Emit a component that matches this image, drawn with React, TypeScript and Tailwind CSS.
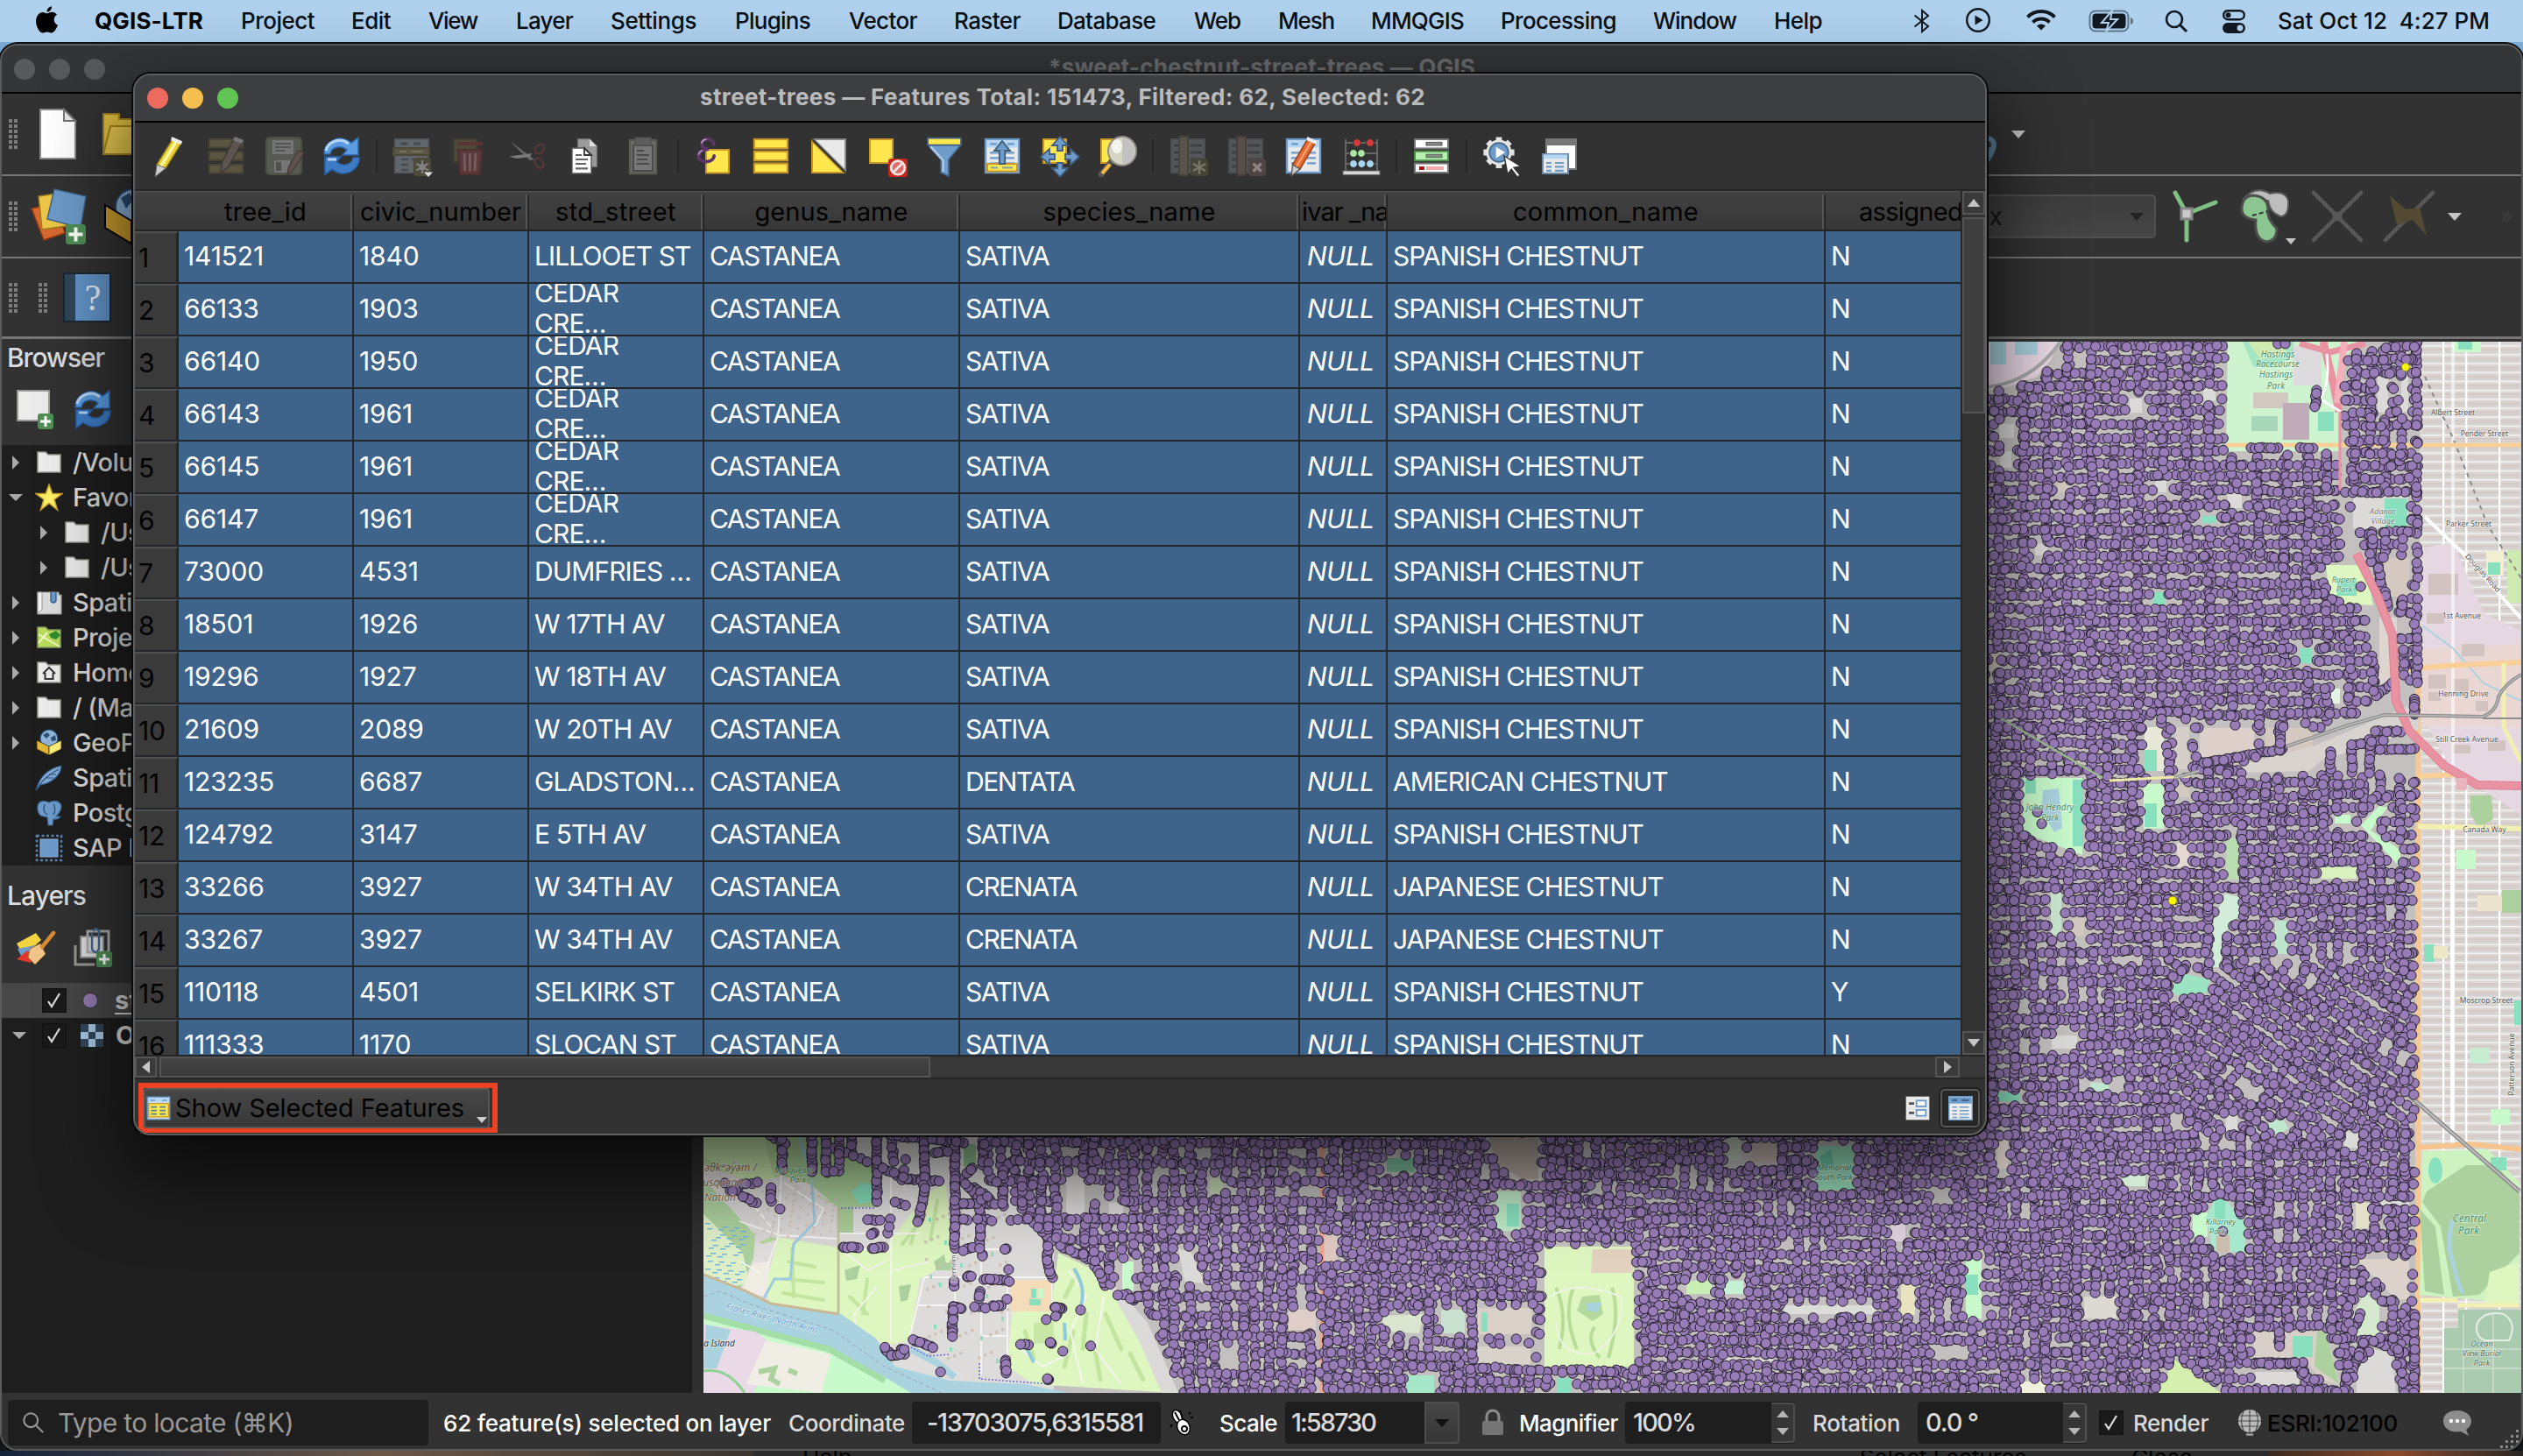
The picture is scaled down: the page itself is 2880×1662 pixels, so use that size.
import { useLayoutEffect, useMemo, useRef, type ReactNode } from "react";

/* ---------- text that keeps a fixed advance width ---------- */

function Fit({ w, className = "", children }: { w: number; className?: string; children: string }) {
  const ref = useRef<HTMLSpanElement>(null);
  useLayoutEffect(() => {
    const el = ref.current;
    if (!el) return;
    el.style.letterSpacing = "0px";
    const natural = el.getBoundingClientRect().width;
    el.style.letterSpacing = `${(w - natural) / children.length}px`;
  }, [w, children]);
  return (
    <span className="inline-block shrink-0" style={{ width: w }}>
      <span ref={ref} className={"inline-block whitespace-pre " + className}>
        {children}
      </span>
    </span>
  );
}

function Ico({ className = "size-12", children }: { className?: string; children: ReactNode }) {
  return (
    <svg viewBox="0 0 24 24" className={"shrink-0 " + className} fill="none">
      {children}
    </svg>
  );
}

/* ---------- map ---------- */

type Pt = [number, number];
type Area = { p: Pt[]; fill: string };

function rect(x1: number, y1: number, x2: number, y2: number, fill: string): Area {
  return { p: [[x1, y1], [x2, y1], [x2, y2], [x1, y2]], fill };
}

const GREY = "#dcdad8";
const TAUPE = "#d3c9c1";
const PARK = "#c8facc";
const PITCH = "#88e0be";
const GOLF = "#def6c0";

const openAreas: Area[] = [
  { p: [[2268, 390], [2352, 390], [2340, 412], [2325, 430], [2296, 440], [2268, 446]], fill: "#ead9e6" },
  { p: [[2543, 390], [2690, 390], [2672, 420], [2672, 515], [2541, 515]], fill: "#cdf3cf" },
  rect(2686, 566, 2749, 603, GREY),
  { p: [[2655, 645], [2700, 645], [2709, 691], [2660, 688]], fill: GOLF },
  rect(2722, 637, 2750, 681, TAUPE),
  rect(2448, 830, 2470, 880, "#e8e8d8"),
  rect(2483, 830, 2499, 878, "#d5cdc8"),
  rect(2511, 831, 2573, 864, "#ddcfc9"),
  rect(2586, 831, 2597, 862, TAUPE),
  rect(2609, 831, 2640, 858, TAUPE),
  { p: [[2560, 872], [2640, 852], [2720, 818], [2762, 800], [2762, 832], [2650, 868], [2636, 880], [2560, 882]], fill: "#d9d3d0" },
  { p: [[2309, 888], [2377, 888], [2377, 976], [2340, 962], [2309, 950]], fill: PARK },
  rect(2447, 895, 2470, 946, PARK),
  rect(2484, 896, 2499, 910, TAUPE),
  rect(2485, 962, 2499, 990, "#e3d8d2"),
  rect(2541, 957, 2556, 1004, "#b8dcb0"),
  { p: [[2540, 1020], [2556, 1024], [2556, 1044], [2540, 1064], [2534, 1104], [2525, 1104], [2527, 1050]], fill: "#d2ecd9" },
  rect(2597, 1051, 2611, 1089, "#bfe5cf"),
  rect(2341, 1018, 2353, 1068, "#cde9d2"),
  rect(2366, 1048, 2379, 1068, TAUPE),
  { p: [[2477, 1128], [2495, 1112], [2522, 1118], [2518, 1134], [2484, 1136]], fill: "#9be3c3" },
  { p: [[2695, 942], [2716, 920], [2725, 922], [2706, 948], [2740, 970], [2740, 990]], fill: PARK },
  rect(2665, 930, 2683, 940, PARK),
  rect(2650, 990, 2690, 1003, "#d9f2c0"),
  rect(2513, 589, 2529, 597, PITCH),
  rect(2457, 676, 2471, 692, PITCH),
  rect(2625, 740, 2640, 757, PITCH),
  rect(2660, 786, 2671, 803, "#e4f3e4"),
  rect(2716, 705, 2736, 780, "#ddd5d0"),
  rect(2273, 746, 2281, 766, TAUPE),
  rect(2323, 620, 2337, 634, GREY),
  rect(2431, 455, 2445, 471, GREY),
  rect(2515, 441, 2529, 457, GREY),
  rect(2282, 484, 2299, 500, GREY),
  rect(2283, 515, 2296, 534, GREY),
  rect(2460, 549, 2473, 562, GREY),
  rect(2543, 563, 2559, 580, GREY),
  rect(2349, 549, 2362, 562, TAUPE),
  rect(2714, 430, 2726, 471, GREY),
  rect(2741, 430, 2749, 470, GREY),
  rect(2073, 1308, 2116, 1358, "#9be3c0"),
  rect(1972, 1298, 1987, 1325, "#c5d3c0"),
  rect(2000, 1303, 2031, 1327, "#c9b9b4"),
  rect(2280, 1300, 2292, 1334, "#d9cfc6"),
  rect(2503, 1384, 2520, 1412, PARK),
  { p: [[2528, 1369], [2540, 1369], [2563, 1396], [2563, 1429], [2526, 1429], [2518, 1390]], fill: "#a5e8cb" },
  rect(2244, 1437, 2262, 1505, PARK),
  rect(2689, 1373, 2704, 1402, "#e2dfc9"),
  rect(2718, 1370, 2750, 1376, GREY),
  { p: [[2690, 1437], [2750, 1437], [2750, 1483], [2735, 1483]], fill: "#ddd1cc" },
  { p: [[2700, 1475], [2716, 1490], [2716, 1527], [2690, 1527], [2686, 1500]], fill: "#d3e8cc" },
  { p: [[2573, 1520], [2655, 1520], [2672, 1582], [2650, 1575], [2630, 1552], [2573, 1552]], fill: "#d8cfc8" },
  rect(2574, 1566, 2624, 1582, GREY),
  { p: [[2690, 1565], [2710, 1540], [2730, 1545], [2735, 1590], [2690, 1590]], fill: GREY },
  { p: [[2482, 1552], [2500, 1565], [2535, 1590], [2463, 1590]], fill: "#d4efae" },
  rect(2036, 1490, 2142, 1500, "#dcdcd8"),
  rect(1925, 1462, 1954, 1477, "#c9eeb4"),
  rect(1968, 1462, 1990, 1477, "#c4f0d4"),
  rect(2379, 1480, 2416, 1505, "#dcd8d2"),
  rect(2158, 1396, 2175, 1417, "#e2d3e0"),
  rect(2170, 1466, 2186, 1501, "#e8e2c0"),
  rect(1968, 1550, 2024, 1554, GREY),
  rect(2280, 1247, 2305, 1257, PITCH),
  rect(2386, 1236, 2407, 1245, "#bfe6cf"),
  rect(2342, 1182, 2371, 1197, GREY),
  rect(2541, 1272, 2554, 1292, GREY),
  { p: [[2586, 1285], [2605, 1275], [2612, 1288], [2600, 1296]], fill: "#bfe8cf" },
  rect(2676, 1292, 2694, 1310, GREY),
  rect(2423, 1342, 2449, 1354, "#cfe9d2"),
  rect(2306, 1577, 2336, 1590, "#f2eedc"),
  rect(1763, 1423, 1865, 1560, GOLF),
  rect(1708, 1360, 1736, 1405, "#bfe9c8"),
  { p: [[1698, 1296], [1756, 1296], [1756, 1346], [1738, 1346], [1710, 1330]], fill: "#b5a8a0" },
  rect(1583, 1322, 1615, 1338, "#7fbf9f"),
  rect(1687, 1493, 1748, 1523, "#d9d0c8"),
  rect(1687, 1537, 1747, 1557, "#d8d2ca"),
  rect(1471, 1495, 1502, 1518, "#e0cdc8"),
  rect(1606, 1570, 1637, 1590, "#a6e6c8"),
  rect(1777, 1573, 1793, 1590, PITCH),
  rect(1281, 1440, 1294, 1473, PARK),
  rect(1217, 1342, 1238, 1388, GREY),
  rect(1266, 1373, 1282, 1388, GREY),
  rect(1381, 1345, 1396, 1362, "#c4d9b4"),
  rect(1508, 1410, 1526, 1442, "#e0c9c2"),
  { p: [[1345, 1425], [1360, 1430], [1375, 1465], [1352, 1462]], fill: GREY },
  { p: [[1575, 1502], [1625, 1500], [1620, 1522], [1585, 1520]], fill: "#d9e5cf" },
  rect(1645, 1495, 1672, 1522, "#c9e2d0"),
];

const details: Area[] = [
  { p: [[2560, 390], [2618, 390], [2618, 404], [2600, 420], [2572, 418]], fill: "#a4e6c4" },
  { p: [[2566, 390], [2612, 390], [2608, 406], [2580, 410]], fill: "#cdebb0" },
  rect(2572, 448, 2612, 466, TAUPE),
  rect(2570, 475, 2600, 492, "#a7d7b8"),
  rect(2606, 460, 2636, 502, "#c0acb8"),
  rect(2646, 470, 2664, 492, PITCH),
  rect(2618, 395, 2650, 440, "#dddadd"),
  rect(2722, 569, 2748, 602, PITCH),
  rect(2668, 660, 2690, 680, PITCH),
  rect(2272, 390, 2290, 416, "#aad3df"),
  rect(2300, 390, 2326, 405, "#aad3df"),
  { p: [[2332, 902], [2350, 900], [2354, 945], [2345, 950], [2330, 925]], fill: "#aad3df" },
  rect(2366, 890, 2377, 966, PITCH),
  rect(2312, 890, 2324, 906, PITCH),
  rect(2448, 856, 2462, 880, PITCH),
  rect(2448, 917, 2462, 944, PITCH),
  rect(2528, 1369, 2540, 1392, PITCH),
  rect(2530, 1410, 2545, 1429, "#cbbcae"),
  rect(2244, 1455, 2258, 1478, PITCH),
  rect(2617, 1525, 2640, 1549, PITCH),
  { p: [[2645, 1520], [2655, 1520], [2670, 1580], [2642, 1560]], fill: "#add19e" },
  { p: [[1818, 1426], [1864, 1426], [1864, 1453], [1816, 1453]], fill: "#e3d2c0" },
  { p: [[1806, 1480], [1826, 1478], [1830, 1500], [1818, 1508], [1800, 1496]], fill: "#b5d99c" },
  { p: [[1810, 1488], [1828, 1486], [1824, 1498], [1812, 1496]], fill: "#aad3df" },
  rect(1720, 1374, 1734, 1400, PITCH),
  rect(1691, 1498, 1698, 1520, PITCH),
  { p: [[2077, 1320], [2090, 1312], [2094, 1330], [2080, 1334]], fill: "#76cfae" },
];

function inside(pts: Pt[], x: number, y: number) {
  let hit = false;
  for (let i = 0, j = pts.length - 1; i < pts.length; j = i++) {
    const [xi, yi] = pts[i];
    const [xj, yj] = pts[j];
    if (yi > y !== yj > y && x < ((xj - xi) * (y - yi)) / (yj - yi) + xi) hit = !hit;
  }
  return hit;
}

const boxes = openAreas.map((a) => {
  const xs = a.p.map((q) => q[0]);
  const ys = a.p.map((q) => q[1]);
  return [Math.min(...xs) - 5, Math.min(...ys) - 5, Math.max(...xs) + 5, Math.max(...ys) + 5];
});

function blocked(x: number, y: number) {
  for (let i = 0; i < openAreas.length; i++) {
    const b = boxes[i];
    if (x < b[0] || x > b[2] || y < b[1] || y > b[3]) continue;
    const p = openAreas[i].p;
    if (inside(p, x - 3, y) || inside(p, x + 3, y) || inside(p, x, y - 3) || inside(p, x, y + 3)) return true;
  }
  return false;
}

type Zone = { p: Pt[]; angle: number; row: number; col: number; rowSkip: number; colSkip: number };

const zones: Zone[] = [
  { p: [[2262, 446], [2296, 440], [2330, 428], [2354, 388], [2543, 388], [2543, 518], [2668, 518], [2673, 640], [2700, 700], [2716, 790], [2690, 815], [2640, 835], [2262, 835]], angle: 0, row: 15, col: 27, rowSkip: 0.01, colSkip: 0.1 },
  { p: [[2676, 405], [2760, 388], [2760, 780], [2745, 780], [2735, 700], [2700, 630], [2676, 560]], angle: 0, row: 15.2, col: 18.5, rowSkip: 0.08, colSkip: 0.08 },
  { p: [[2262, 828], [2640, 828], [2640, 850], [2560, 872], [2560, 884], [2757, 884], [2757, 1100], [2262, 1100]], angle: 0, row: 14.8, col: 22, rowSkip: 0.02, colSkip: 0.1 },
  { p: [[2262, 1100], [2470, 1100], [2500, 1300], [2262, 1300]], angle: 0, row: 14.6, col: 22, rowSkip: 0.03, colSkip: 0.1 },
  { p: [[2470, 1100], [2757, 1100], [2757, 1270], [2700, 1300], [2500, 1300]], angle: 34, row: 13.8, col: 23, rowSkip: 0.04, colSkip: 0.15 },
  { p: [[2262, 1300], [2500, 1300], [2700, 1300], [2757, 1270], [2757, 1590], [2262, 1590]], angle: 0, row: 14.8, col: 17, rowSkip: 0.1, colSkip: 0.08 },
  { p: [[1880, 1290], [2262, 1290], [2262, 1590], [1880, 1590]], angle: 0, row: 13.8, col: 18, rowSkip: 0.05, colSkip: 0.14 },
  { p: [[1510, 1290], [1880, 1290], [1880, 1590], [1510, 1590]], angle: 1.5, row: 14, col: 16.5, rowSkip: 0.12, colSkip: 0.1 },
  { p: [[1122, 1290], [1510, 1290], [1510, 1590], [1348, 1590], [1335, 1550], [1312, 1500], [1275, 1480], [1250, 1440], [1175, 1395], [1122, 1340]], angle: 0, row: 22, col: 15.2, rowSkip: 0.1, colSkip: 0.06 },
];

/* isolated rows of trees: x1, y1, x2, y2, count */
const rows: [number, number, number, number, number][] = [
  [874, 1292, 896, 1306, 5], [893, 1300, 893, 1335, 9], [927, 1296, 927, 1338, 11], [943, 1296, 943, 1338, 10],
  [958, 1292, 958, 1330, 7], [972, 1296, 972, 1316, 6], [945, 1338, 958, 1337, 3], [950, 1310, 990, 1326, 6],
  [1001, 1296, 1001, 1372, 20], [1015, 1296, 1100, 1304, 20], [1018, 1304, 1020, 1326, 5], [1034, 1324, 1030, 1346, 3],
  [1008, 1334, 1036, 1346, 8], [1036, 1346, 1072, 1348, 10], [1055, 1300, 1055, 1360, 16], [1055, 1360, 1048, 1395, 9],
  [1090, 1296, 1090, 1425, 32], [1068, 1316, 1082, 1314, 5], [1104, 1340, 1110, 1334, 4], [1096, 1345, 1120, 1370, 9],
  [1022, 1372, 1034, 1376, 3], [1090, 1374, 1136, 1374, 14], [1112, 1356, 1130, 1368, 6], [1119, 1376, 1119, 1425, 12],
  [1122, 1303, 1122, 1330, 8], [1145, 1335, 1145, 1377, 13], [1167, 1355, 1167, 1380, 7], [1090, 1392, 1104, 1392, 4],
  [990, 1392, 1004, 1393, 4], [1016, 1392, 1014, 1408, 3], [995, 1409, 997, 1408, 3], [962, 1424, 980, 1424, 8],
  [995, 1425, 1008, 1424, 6], [1116, 1392, 1132, 1393, 4], [1154, 1393, 1170, 1392, 3], [1100, 1427, 1110, 1424, 4],
  [1121, 1432, 1121, 1434, 2], [1147, 1426, 1149, 1426, 2], [1151, 1449, 1151, 1450, 1], [1104, 1457, 1108, 1457, 5],
  [1123, 1460, 1152, 1462, 10], [1089, 1462, 1089, 1468, 3], [1118, 1474, 1118, 1482, 4], [1113, 1491, 1124, 1493, 3],
  [1134, 1491, 1142, 1491, 5], [1150, 1483, 1150, 1484, 1], [1088, 1492, 1098, 1493, 5], [1088, 1492, 1087, 1525, 10],
  [1196, 1400, 1196, 1442, 12], [1196, 1442, 1201, 1459, 5], [1204, 1492, 1212, 1494, 6], [1206, 1500, 1205, 1502, 2],
  [1195, 1506, 1195, 1507, 1], [1234, 1495, 1234, 1496, 1], [1165, 1534, 1174, 1535, 3], [1199, 1532, 1200, 1533, 3],
  [1213, 1542, 1214, 1542, 1], [1245, 1537, 1246, 1537, 1], [1196, 1574, 1197, 1575, 3], [1148, 1552, 1148, 1567, 6],
  [1073, 1566, 1074, 1566, 1], [1042, 1529, 1065, 1538, 9], [1010, 1538, 1018, 1548, 6], [1018, 1547, 1032, 1546, 7],
  [1028, 1540, 1032, 1540, 3], [827, 1351, 828, 1351, 1], [846, 1352, 864, 1350, 4], [834, 1359, 842, 1359, 4],
  [848, 1366, 863, 1373, 5], [880, 1356, 880, 1372, 5], [890, 1380, 891, 1380, 1],
  [1175, 1392, 1200, 1416, 6], [1210, 1422, 1250, 1440, 11], [1250, 1445, 1262, 1468, 6],
  [2600, 392, 2608, 392, 2], [2644, 446, 2643, 464, 6], [2570, 511, 2600, 512, 8], [2626, 511, 2640, 512, 4],
  [2325, 927, 2326, 927, 1], [2330, 941, 2331, 941, 1], [2695, 670, 2696, 670, 1], [2662, 684, 2670, 688, 3],
  [2715, 645, 2718, 668, 7], [2722, 676, 2726, 692, 5], [2730, 780, 2712, 795, 6], [2756, 798, 2756, 816, 7],
  [2660, 858, 2660, 882, 6], [2685, 850, 2685, 882, 7], [2705, 845, 2705, 882, 8], [2712, 835, 2740, 835, 8],
  [2712, 855, 2756, 855, 11], [2690, 850, 2720, 845, 8], [2537, 1406, 2538, 1406, 1], [2508, 872, 2606, 855, 24],
  [2602, 1520, 2602, 1537, 7], [2756, 1590, 2756, 1500, 26], [2745, 1590, 2738, 1540, 14], [2738, 1540, 2705, 1530, 10],
  [2700, 1530, 2680, 1575, 14], [2695, 1500, 2680, 1530, 9], [2574, 1556, 2620, 1556, 13], [2620, 1556, 2645, 1585, 11],
];

function makeDots() {
  let seed = 90210;
  const rnd = () => {
    seed = (seed * 1664525 + 1013904223) >>> 0;
    return seed / 4294967296;
  };
  const out: Pt[] = [];
  for (const z of zones) {
    const xs = z.p.map((q) => q[0]);
    const ys = z.p.map((q) => q[1]);
    const cx = (Math.min(...xs) + Math.max(...xs)) / 2;
    const cy = (Math.min(...ys) + Math.max(...ys)) / 2;
    const hw = (Math.max(...xs) - Math.min(...xs)) / 2;
    const hh = (Math.max(...ys) - Math.min(...ys)) / 2;
    const r = z.angle > 5 ? Math.hypot(hw, hh) : 0;
    const ex = r || hw + 8;
    const ey = r || hh + 8;
    const c = Math.cos((z.angle * Math.PI) / 180);
    const s = Math.sin((z.angle * Math.PI) / 180);
    const put = (u: number, v: number) => {
      const x = cx + u * c - v * s;
      const y = cy + u * s + v * c;
      if (inside(z.p, x, y) && !blocked(x, y)) out.push([x, y]);
    };
    const line = (horizontal: boolean, at: number, from: number, to: number, skip: number) => {
      let t = from;
      while (t < to) {
        const block = 24 + rnd() * 46;
        const end = Math.min(to, t + block);
        const shift = (rnd() - 0.5) * 3;
        if (rnd() > skip) {
          while (t < end) {
            const off = at + shift + (rnd() - 0.5) * (rnd() < 0.1 ? 7 : 2.2);
            if (horizontal) put(t, off);
            else put(off, t);
            t += rnd() < 0.3 ? 1.5 + rnd() * 2 : 5 + rnd() * 5;
          }
        }
        t = end;
      }
    };
    for (let v = -ey; v < ey; v += z.row) line(true, v + (rnd() - 0.5) * 2, -ex, ex, z.rowSkip);
    for (let u = -ex; u < ex; u += z.col) line(false, u + (rnd() - 0.5) * 6, -ey, ey, z.colSkip);
  }
  for (const [x1, y1, x2, y2, n] of rows) {
    for (let i = 0; i < n; i++) {
      const t = n === 1 ? 0 : i / (n - 1);
      out.push([x1 + (x2 - x1) * t + (rnd() - 0.5) * 1.6, y1 + (y2 - y1) * t + (rnd() - 0.5) * 1.6]);
    }
  }
  /* survey order is unrelated to position, so neighbours overlap either way round */
  for (let i = out.length - 1; i > 0; i--) {
    const j = Math.floor(rnd() * (i + 1));
    [out[i], out[j]] = [out[j], out[i]];
  }
  return out;
}

const poly = (p: Pt[]) => p.map((q) => q.join(",")).join(" ");

const eastStreets = Array.from({ length: 118 }, (_, i) => 394 + i * 10.2);

function MapLabel({ x, y, size = 10, fill = "#555", rotate = 0, italic = false, children }: { x: number; y: number; size?: number; fill?: string; rotate?: number; italic?: boolean; children: string }) {
  return (
    <text
      x={x}
      y={y}
      fontSize={size}
      fill={fill}
      textAnchor="middle"
      fontFamily="Noto Sans, sans-serif"
      fontStyle={italic ? "italic" : "normal"}
      stroke="#ffffff"
      strokeOpacity={0.6}
      strokeWidth={1.4}
      paintOrder="stroke"
      transform={`rotate(${rotate} ${x} ${y})`}
    >
      {children}
    </text>
  );
}

function MapCanvas() {
  const dots = useMemo(makeDots, []);
  return (
    <svg viewBox="803 390 2075 1200" fill="none" className="h-[1200px] w-[2075px] shrink-0 bg-[#dddbd9]">
      {/* city ground */}
      <rect x="1200" y="1290" width="1562" height="300" fill="#c4c0c0" />
      <rect x="2262" y="390" width="500" height="1200" fill="#c4c0c0" />

      {/* eastern suburb */}
      <rect x="2762" y="390" width="116" height="1200" fill="#dad7d5" />
      {eastStreets.map((y) => (
        <g key={y}>
          <rect x="2764" y={y} width="114" height="1.4" fill="#f4f3f2" />
          <rect x="2766" y={y + 4} width="110" height="2" fill="#d3c3be" opacity="0.75" />
          <rect x="2766" y={y + 7} width="110" height="1" fill="#cbc6c3" opacity="0.8" />
        </g>
      ))}
      {[2788, 2814, 2852].map((x) => (
        <rect key={x} x={x} y="390" width="2.4" height="1200" fill="#ffffff" />
      ))}
      <polygon points="2766,625 2800,620 2835,700 2878,720 2878,930 2800,880 2766,820" fill="#e6d8e2" />
      <polygon points="2766,740 2878,735 2878,830 2766,830" fill="#ead7d4" />
      {[[2772, 655, 34, 24], [2770, 700, 20, 12], [2810, 735, 26, 14], [2772, 770, 20, 16], [2800, 775, 18, 18], [2826, 800, 14, 12], [2800, 850, 20, 10], [2840, 845, 20, 12], [2772, 790, 14, 10]].map(([x, y, w, h]) => (
        <rect key={`${x}-${y}`} x={x} y={y} width={w} height={h} fill="#d2c3c0" />
      ))}
      <rect x="2800" y="390" width="32" height="12" fill="#c8facc" />
      <rect x="2806" y="390" width="16" height="9" fill={PITCH} />
      <rect x="2838" y="629" width="20" height="28" fill="#f2efd0" />
      <rect x="2840" y="642" width="14" height="14" fill={PITCH} />
      <rect x="2862" y="628" width="16" height="60" fill="#cdebb0" />
      <polygon points="2820,908 2844,908 2846,935 2830,945 2820,930" fill="#add19e" />
      <rect x="2804" y="970" width="22" height="22" fill="#c8facc" />
      <rect x="2828" y="1022" width="36" height="18" fill="#ece4cf" />
      <rect x="2856" y="1016" width="22" height="26" fill="#add19e" />
      <rect x="2767" y="1078" width="12" height="20" fill={PITCH} />
      <rect x="2778" y="1080" width="16" height="14" fill="#eee8c8" />
      <rect x="2870" y="1142" width="8" height="28" fill={PITCH} />
      <rect x="2820" y="1196" width="22" height="18" fill="#c6ecd2" />
      <rect x="2843" y="1266" width="22" height="18" fill="#c8facc" />
      <rect x="2798" y="390" width="4" height="740" fill="#ffffff" opacity="0.6" />
      <rect x="2797" y="940" width="5" height="368" fill="#ffffff" />
      <path d="M2768 590 L2810 630 L2858 684 L2878 706" stroke="#fff" strokeWidth="4" />
      <path d="M2768 430 L2800 500 L2840 600 L2878 660" stroke="#8a8a8a" strokeWidth="2" strokeDasharray="5 5" />
      <path d="M2766 715 L2800 740 L2835 780 L2878 800" stroke="#aad3df" strokeWidth="2" />
      <path d="M2541 508 L2878 508" stroke="#f8cf97" strokeWidth="5" />
      <path d="M2740 765 L2790 760 L2878 756" stroke="#f8cf97" strokeWidth="6" />
      <path d="M2760 760 L2760 1590" stroke="#f4c795" strokeWidth="6" />
      <path d="M2760 886 L2810 884" stroke="#f8cf97" strokeWidth="6" />
      <path d="M2760 943 L2878 946" stroke="#f2f0b0" strokeWidth="6" />
      <path d="M2858 757 L2858 830 L2878 870" stroke="#f2f0b0" strokeWidth="5" />
      <path d="M2760 1310 L2820 1306 L2878 1312" stroke="#f6c58e" strokeWidth="6" />

      {/* central park */}
      <polygon points="2765,1314 2840,1312 2876,1350 2876,1488 2762,1478" fill="#cdf3c0" />
      <polygon points="2770,1360 2815,1330 2850,1330 2876,1362 2876,1430 2830,1478 2800,1480 2786,1400 2765,1372" fill="#add19e" />
      <polygon points="2762,1380 2780,1400 2790,1478 2768,1474" fill="#add19e" />
      <ellipse cx="2780" cy="1336" rx="8" ry="15" fill={PITCH} />
      <rect x="2843" y="1321" width="18" height="15" fill={PITCH} />
      <path d="M2800 1392 Q2792 1420 2800 1440 Q2806 1470 2812 1476" stroke="#aad3df" strokeWidth="5" />
      <polygon points="2842,1452 2876,1440 2876,1488 2836,1488" fill="#def6c0" />
      <path d="M2762 1484 L2805 1484 M2805 1490 L2876 1490" stroke="#f3f0b4" strokeWidth="5" />
      <polygon points="2790,1516 2806,1516 2806,1495 2878,1495 2878,1590 2790,1590" fill="#aacbaf" />
      <path d="M2790 1540 H2878 M2790 1562 H2878 M2812 1500 V1590 M2846 1500 V1590" stroke="#cfe0cf" strokeWidth="1.5" />
      <path d="M2828 1510 Q2824 1525 2836 1530 H2864 Q2874 1510 2858 1500 Q2836 1496 2828 1510" stroke="#e6efe6" strokeWidth="2" />
      <path d="M2738 1240 L2876 1360" stroke="#8f8f8f" strokeWidth="5" />
      <path d="M2738 1240 L2876 1360" stroke="#c9c9c9" strokeWidth="1.5" />

      {/* river delta in the south-west */}
      <rect x="803" y="1290" width="400" height="300" fill="#e0dedd" />
      <polygon points="803,1290 888,1290 892,1345 950,1372 940,1400 870,1420 803,1380" fill="#b5d79b" />
      <polygon points="803,1290 870,1290 885,1350 850,1352 803,1320" fill="#c9e6ae" />
      <polygon points="893,1290 940,1290 1000,1330 1000,1378 974,1378 974,1407 957,1407 956,1378 925,1352 893,1342" fill="#a9ce98" />
      <polygon points="972,1360 984,1350 996,1352 996,1372 980,1374" fill={PITCH} />
      <polygon points="803,1330 860,1350 893,1342 956,1378 956,1426 880,1412 862,1420 803,1352" fill="#dad7d6" />
      <polygon points="803,1346 862,1410 860,1436 845,1472 803,1440" fill="#add19e" />
      <polygon points="803,1386 848,1430 855,1464 832,1470 803,1452" fill="#dff0c8" />
      {Array.from({ length: 46 }, (_, i) => (
        <rect key={i} x={805 + ((i * 17) % 44)} y={1396 + ((i * 29) % 68)} width="6" height="1.4" fill="#6fb3e0" />
      ))}
      <polygon points="888,1412 956,1424 956,1500 880,1490 874,1470" fill={GOLF} />
      <polygon points="860,1442 880,1440 874,1480 846,1474" fill="#f0ebe3" />
      <polygon points="1060,1360 1080,1352 1086,1440 1050,1460 1038,1530 1010,1536 957,1498 957,1428 1010,1424" fill={GOLF} />
      <rect x="1100" y="1306" width="14" height="26" fill="#93c493" />
      <g fill="#add19e">
        <polygon points="964,1450 982,1444 978,1460 966,1462" />
        <polygon points="1066,1440 1078,1432 1080,1444 1068,1446" />
        <polygon points="1026,1468 1040,1466 1036,1484 1028,1486" />
        <polygon points="1068,1444 1088,1440 1086,1450 1068,1450" />
      </g>
      <g stroke="#c3e5a0" strokeWidth="4" strokeLinecap="round">
        <path d="M900 1440 L930 1446 M896 1460 L940 1464 M894 1476 L940 1484 M904 1425 L906 1480 M1050 1380 L1040 1420 M1070 1370 L1062 1415 M1030 1420 L1046 1400 M970 1480 L990 1500 M990 1460 L985 1500" />
      </g>
      <g stroke="#f6f4f2" strokeWidth="1.8">
        <path d="M1017 1330 V1530 M957 1426 H1017 M965 1430 L990 1450 L1010 1440 M980 1530 L975 1500 L1000 1470 M957 1408 H1050 M1020 1450 L1060 1440 M844 1394 L890 1410 L956 1414 M892 1340 L888 1412 L874 1450 M845 1440 L870 1454 M895 1350 L940 1380 L930 1400 M860 1376 L880 1400" />
      </g>
      <path d="M912 1298 L926 1340 L930 1395 L906 1420 L902 1460 L884 1460 L872 1482" stroke="#9fcbe0" strokeWidth="3" />
      <path d="M957 1378 V1500" stroke="#c2c29a" strokeWidth="3" />
      <polygon points="1055,1458 1200,1458 1200,1575 1110,1575 1036,1536" fill="#dddcdb" />
      <polygon points="1090,1370 1165,1385 1196,1420 1200,1460 1090,1460" fill="#dddbda" />
      <polygon points="1208,1430 1250,1450 1300,1500 1330,1560 1340,1590 1180,1580 1150,1560 1155,1498 1200,1492" fill={GOLF} />
      <polygon points="1180,1510 1202,1508 1204,1532 1180,1534" fill="#c9e8a8" />
      <polygon points="1256,1452 1284,1480 1310,1510 1345,1590 1326,1590 1300,1530" fill="#dcdad8" />
      <g stroke="#c3e5a0" strokeWidth="5" strokeLinecap="round">
        <path d="M1226 1460 L1216 1480 M1240 1500 L1236 1540 M1262 1500 L1280 1540 M1250 1540 L1256 1575 M1225 1520 L1215 1560 M1290 1545 L1305 1575 M1170 1520 L1180 1550" />
      </g>
      <g stroke="#f6f4f2" strokeWidth="2">
        <path d="M1220 1450 L1240 1480 L1222 1520 L1236 1580 M1260 1480 L1250 1540 L1280 1580 M1165 1540 L1190 1560 L1220 1545 M1090 1425 V1500 M1120 1400 V1570 M1090 1426 H1150 M1055 1458 H1200 M1150 1460 V1570 M1120 1525 H1150 M1047 1490 H1090 M1200 1420 V1498 M1055 1458 L1037 1532" />
      </g>
      <path d="M1226 1448 Q1240 1470 1234 1490 M1170 1535 L1180 1555 M1215 1510 L1216 1530" stroke="#8ec9de" strokeWidth="4" />
      <rect x="1153" y="1461" width="47" height="36" fill="#f5dcb8" />
      <rect x="1177" y="1471" width="6" height="11" fill={PITCH} />
      <rect x="1185" y="1471" width="6" height="11" fill={PARK} />
      <rect x="1175" y="1483" width="13" height="7" fill={PITCH} />
      <g fill="#cdbcae">
        {Array.from({ length: 70 }, (_, i) => (
          <rect key={i} x={1054 + ((i * 37) % 98)} y={1382 + ((i * 53) % 185)} width="3.4" height="3.4" opacity="0.8" />
        ))}
        {Array.from({ length: 60 }, (_, i) => (
          <rect key={`w${i}`} x={860 + ((i * 23) % 94)} y={1356 + ((i * 31) % 56)} width="2.6" height="2.6" opacity="0.7" />
        ))}
      </g>
      <g fill={PITCH}>
        {Array.from({ length: 16 }, (_, i) => (
          <rect key={i} x={1060 + ((i * 47) % 88)} y={1390 + ((i * 61) % 170)} width="3" height="5" />
        ))}
      </g>
      <polygon points="803,1456 850,1474 880,1488 960,1500 1000,1528 1022,1560 1085,1576 1170,1580 1220,1590 1030,1590 1000,1572 950,1545 803,1506" fill="#aad3df" />
      <path d="M803 1455 L850 1473 L880 1488 L958 1500" stroke="#c9b897" strokeWidth="3" />
      <path d="M1040 1540 L1070 1556 L1090 1572" stroke="#aad3df" strokeWidth="8" />
      <polygon points="803,1500 950,1540 1010,1572 1040,1590 803,1590" fill="#c8facc" />
      <path d="M803 1502 L946 1540 L1010 1576" stroke="#a3dea7" strokeWidth="7" />
      <polygon points="803,1512 862,1520 884,1536 860,1590 803,1590" fill="#ead9e6" />
      <polygon points="806,1512 834,1518 818,1562 803,1562" fill="#aad3df" />
      <polygon points="874,1530 949,1546 938,1590 852,1580" fill="#f0ede5" />
      <path d="M866 1566 L884 1562 L880 1574 L890 1580 M900 1564 L910 1568" stroke="#add19e" strokeWidth="6" />
      <path d="M803 1565 Q830 1560 850 1590" stroke="#8fd095" strokeWidth="3" />
      <path d="M803 1480 L822 1474 L860 1490 L950 1518 L1010 1560 L1075 1590" stroke="#9b8bb8" strokeWidth="1" strokeDasharray="5 3" opacity="0.7" />
      <path d="M960 1379 H1000 M1036 1536 L1060 1548 L1084 1546 M1118 1556 V1574 L1200 1580" stroke="#6f6fd8" strokeWidth="1.6" strokeDasharray="2 2" />

      {/* parks and blocks without street trees */}
      {openAreas.map((a, i) => (
        <polygon key={i} points={poly(a.p)} fill={a.fill} />
      ))}
      {details.map((a, i) => (
        <polygon key={i} points={poly(a.p)} fill={a.fill} />
      ))}
      <path d="M1776 1470 Q1790 1500 1780 1540 M1796 1470 Q1784 1500 1800 1540 M1840 1470 Q1850 1500 1836 1550 M1820 1515 Q1810 1530 1826 1550" stroke="#b9dc98" strokeWidth="4" />
      <path d="M1770 1480 Q1800 1460 1850 1480 Q1856 1520 1820 1545 Q1780 1550 1776 1510" stroke="#eef4e4" strokeWidth="2" />
      <path d="M1509 1290 V1590" stroke="#efa58f" strokeWidth="5" />
      <path d="M2268 442 Q2320 436 2352 390" stroke="#a9a9a9" strokeWidth="4" />
      <path d="M2652 390 L2664 440 L2670 470" stroke="#e892a2" strokeWidth="9" />
      <path d="M2625 392 L2660 402 L2700 392" stroke="#e892a2" strokeWidth="7" />
      <path d="M2676 390 L2668 460" stroke="#f4b0bb" strokeWidth="8" />
      <path d="M2656 404 Q2660 440 2648 455 L2672 470" stroke="#ffffff" strokeWidth="3" />
      <path d="M2541 508 H2676" stroke="#f8cf97" strokeWidth="5" />

      <g fill="#987cb8" stroke="#232028" strokeWidth="1">
        {dots.map(([x, y], i) => (
          <circle key={i} cx={x.toFixed(1)} cy={y.toFixed(1)} r="5.6" />
        ))}
      </g>

      {/* roads above the tree layer */}
      <path d="M2671 470 V560" stroke="#e892a2" strokeWidth="3" />
      <path d="M2284 820 L2400 888" stroke="#9cbf8c" strokeWidth="2.500" />
      <path d="M2408 891 L2500 886" stroke="#eeeaa8" strokeWidth="3" />
      <path d="M2690 632 L2714 680 L2731 725 L2735 800 L2750 834 L2790 874 L2828 896 L2878 897" stroke="#dd7f92" strokeWidth="10" />
      <path d="M2690 632 L2714 680 L2731 725 L2735 800 L2750 834 L2790 874 L2828 896 L2878 897" stroke="#e892a2" strokeWidth="8" />
      <path d="M2482 888 L2510 880 M2610 852 L2680 828 L2722 816 L2834 818 Q2850 812 2852 795 Q2860 780 2878 770" stroke="#8e8e8e" strokeWidth="4" />
      <path d="M2482 888 L2510 880 M2610 852 L2680 828 L2722 816 L2834 818 Q2850 812 2852 795 Q2860 780 2878 770" stroke="#bdbdbd" strokeWidth="1.4" />
      <path d="M2834 820 H2878" stroke="#8e8e8e" strokeWidth="2" />
      <rect x="2804" y="888" width="12" height="14" rx="2" fill="#e8b4be" />
      <circle cx="2746" cy="419" r="4.500" fill="#f7f500" stroke="#8a8a10" strokeWidth="0.6" />
      <circle cx="2480" cy="1028" r="5" fill="#f7f500" stroke="#3a3a10" strokeWidth="0.6" />

      <g fontWeight="400">
        <MapLabel x={2600} y={408} fill="#4a8f5c" italic>Hastings</MapLabel>
        <MapLabel x={2600} y={419} fill="#4a8f5c" italic>Racecourse</MapLabel>
        <MapLabel x={2598} y={431} fill="#4a8f5c" italic>Hastings</MapLabel>
        <MapLabel x={2598} y={444} fill="#4a8f5c" italic>Park</MapLabel>
        <MapLabel x={2720} y={587} size={9} fill="#777" italic>Adanac</MapLabel>
        <MapLabel x={2720} y={598} size={9} fill="#777" italic>Village</MapLabel>
        <MapLabel x={2675} y={665} size={9} fill="#4a8f5c" italic>Rupert</MapLabel>
        <MapLabel x={2676} y={676} size={9} fill="#4a8f5c" italic>Park</MapLabel>
        <MapLabel x={2340} y={925} fill="#4a8f5c" italic>John Hendry</MapLabel>
        <MapLabel x={2340} y={937} fill="#4a8f5c" italic>Park</MapLabel>
        <MapLabel x={2800} y={474} size={8.500}>Albert Street</MapLabel>
        <MapLabel x={2836} y={498} size={8.500}>Pender Street</MapLabel>
        <MapLabel x={2818} y={601} size={8.500}>Parker Street</MapLabel>
        <MapLabel x={2832} y={656} size={8.500} rotate={48}>Douglas Road</MapLabel>
        <MapLabel x={2810} y={706} size={8.500}>1st Avenue</MapLabel>
        <MapLabel x={2812} y={795} size={8.500}>Henning Drive</MapLabel>
        <MapLabel x={2816} y={847} size={8.500}>Still Creek Avenue</MapLabel>
        <MapLabel x={2836} y={950} size={8.500}>Canada Way</MapLabel>
        <MapLabel x={2838} y={1145} size={8.500}>Moscrop Street</MapLabel>
        <MapLabel x={2870} y={1215} size={8.500} rotate={-90}>Patterson Avenue</MapLabel>
        <MapLabel x={2819} y={1395} size={12} fill="#4a8f5c" italic>Central</MapLabel>
        <MapLabel x={2818} y={1409} size={12} fill="#4a8f5c" italic>Park</MapLabel>
        <MapLabel x={2833} y={1537} size={9} fill="#4f6b58" italic>Ocean</MapLabel>
        <MapLabel x={2833} y={1548} size={9} fill="#4f6b58" italic>View Burial</MapLabel>
        <MapLabel x={2833} y={1559} size={9} fill="#4f6b58" italic>Park</MapLabel>
        <MapLabel x={2094} y={1336} size={9} fill="#2f8a5c" italic>Memorial</MapLabel>
        <MapLabel x={2093} y={1347} size={9} fill="#2f8a5c" italic>South Park</MapLabel>
        <MapLabel x={2535} y={1398} size={9} fill="#2f8a5c" italic>Killarney</MapLabel>
        <MapLabel x={2531} y={1409} size={9} fill="#2f8a5c" italic>Park</MapLabel>
        <MapLabel x={834} y={1337} size={12} fill="#8f6b4c" italic>əθkʷəy̓əm /</MapLabel>
        <MapLabel x={822} y={1354} size={12} fill="#8f6b4c" italic>Musqueam</MapLabel>
        <MapLabel x={822} y={1371} size={12} fill="#8f6b4c" italic>Nation</MapLabel>
        <MapLabel x={906} y={1339} size={9} fill="#3f8f52" italic>Musqueam</MapLabel>
        <MapLabel x={911} y={1350} size={9} fill="#3f8f52" italic>Park</MapLabel>
        <MapLabel x={880} y={1508} size={10} fill="#6a9cc8" rotate={15} italic>Fraser River (North Arm)</MapLabel>
        <MapLabel x={816} y={1537} size={10} fill="#333" italic>Sea Island</MapLabel>
        <MapLabel x={1091} y={1448} size={7} rotate={-90}>Blenheim</MapLabel>
      </g>
    </svg>
  );
}

/* ---------- icons ---------- */

function Refresh({ className }: { className?: string }) {
  return (
    <Ico className={className}>
      <path d="M2 11 C2 4 10 -1 17.5 4.5 L21.5 1.5 V11.5 H12.5 L15 8.5 C11 5.5 6 7 5.5 11 Z" fill="#5b9ce0" stroke="#2c66ad" strokeWidth="0.8" />
      <path d="M3 9 C4 4 11 1 16 5" stroke="#b5d5f5" strokeWidth="1.6" />
      <path d="M22 13 C22 20 14 25 6.5 19.5 L2.5 22.5 V12.5 H11.5 L9 15.5 C13 18.5 18 17 18.5 13 Z" fill="#3d7cc4" stroke="#2c66ad" strokeWidth="0.8" />
      <path d="M4 14 H9" stroke="#b5d5f5" strokeWidth="1.4" />
    </Ico>
  );
}

function Pencil() {
  return (
    <Ico>
      <path d="M14.5 2.6 L19.5 4.6 L10.5 19 L5.6 17 Z" fill="#e8d13a" stroke="#a38a12" strokeWidth="0.7" />
      <path d="M16.4 4 L8 17.8" stroke="#fff6a0" strokeWidth="1.8" />
      <path d="M14 1 L20 3.6 L19.3 5.4 L13.6 3.2 Z" fill="#eee" />
      <path d="M5.6 17 L10.5 19 L4.6 23.8 Z" fill="#cfcfcf" stroke="#777" strokeWidth="0.5" />
    </Ico>
  );
}

function ToggleEdit() {
  return (
    <Ico>
      <g fill="#5a5540" stroke="#4b4736">
        <rect x="2.5" y="2.5" width="19" height="4.6" />
        <rect x="2.5" y="9.7" width="19" height="4.6" />
        <rect x="2.5" y="17" width="19" height="4.6" />
      </g>
      <path d="M17 1 L22 3 L13.5 18 L9 22 L9.6 16 Z" fill="#5d544f" stroke="#3e3a38" strokeWidth="0.8" />
      <path d="M17 1 L22 3 L21 5 L16 3 Z" fill="#777" />
    </Ico>
  );
}

function SaveEdits() {
  return (
    <Ico>
      <rect x="2" y="1.5" width="20" height="21" rx="2" fill="#565a52" stroke="#4c4f41" />
      <rect x="5.5" y="3" width="12" height="8" fill="#757575" />
      <path d="M7 5h9M7 7h9M7 9h6" stroke="#4a4a4a" strokeWidth="0.8" />
      <rect x="6.5" y="14.5" width="9" height="7" fill="#757575" />
      <rect x="7.5" y="15.5" width="3" height="5" fill="#505050" />
      <path d="M20 9 L23.5 10.5 L17 20.5 L14 23 L14.5 19 Z" fill="#5f524c" stroke="#413b38" strokeWidth="0.6" />
    </Ico>
  );
}

function NewField() {
  return (
    <Ico>
      <rect x="2.5" y="2.5" width="19" height="19" fill="#60666b" stroke="#54595e" />
      <path d="M5.5 5h4M13 5h4" stroke="#454b50" strokeWidth="1.6" />
      <path d="M6 14h4M12 14h4M6 17h4M6 20h4" stroke="#454b50" strokeWidth="1.2" />
      <rect x="1.5" y="7.5" width="20.5" height="4" fill="#5a5748" stroke="#4b4838" />
      <path d="M5 9.5h4M12 9.5h6" stroke="#777360" />
      <rect x="13" y="13" width="10" height="10.5" rx="2" fill="#4d4a3a" />
      <path d="M18 14.5v7.5M14.6 16.4l6.8 3.8M21.4 16.4l-6.8 3.8" stroke="#808080" strokeWidth="1.1" />
      <circle cx="18" cy="18.3" r="1.8" fill="#808080" />
      <path d="M19 21.2h5l-2.500 2.800z" fill="#ddd" />
    </Ico>
  );
}

function DeleteField() {
  return (
    <Ico>
      <rect x="3" y="2.5" width="13" height="13" fill="#4f4a38" stroke="#444030" />
      <rect x="5" y="4" width="15" height="2" rx="1" fill="#5c3434" />
      <path d="M5.5 8.5h13.5l-1 14h-11.500z" fill="#5a3a3a" stroke="#4e2f2f" />
      <path d="M9 10.500l.4 10M12.200 10.500v10M15.400 10.500l-.4 10" stroke="#786060" strokeWidth="1.3" />
    </Ico>
  );
}

function Scissors() {
  return (
    <Ico>
      <path d="M2 3.500 L16 14 L13.500 14.500 L8 9.500 z" fill="#6a6a6a" />
      <path d="M1.500 12.200 L14.500 10.500 L13.500 12.500 L6 13.500 z" fill="#7a7a7a" />
      <ellipse cx="19" cy="8" rx="2.200" ry="3.200" transform="rotate(45 19 8)" stroke="#5f3a3a" strokeWidth="0.800" />
      <ellipse cx="18.500" cy="16.500" rx="2.200" ry="3.200" transform="rotate(-35 18 16)" stroke="#5f3a3a" strokeWidth="0.800" />
    </Ico>
  );
}

function CopyIcon() {
  return (
    <Ico>
      <path d="M8 2.500h6.500l4 4V18H8z" fill="#9a9a9a" stroke="#888" strokeWidth="0.800" />
      <path d="M14.500 2.500v4h4z" fill="#ddd" />
      <path d="M4.500 7.500h7l4 4V22h-11z" fill="#fff" stroke="#555" strokeWidth="0.700" />
      <path d="M11.500 7.500v4h4z" fill="#fff" stroke="#333" strokeWidth="0.900" />
      <path d="M6.500 11.500h3.500M6.500 14h7M6.500 16.500h6M6.500 19.200h7" stroke="#666" strokeWidth="1.100" />
    </Ico>
  );
}

function PasteIcon() {
  return (
    <Ico>
      <rect x="4.500" y="3" width="15" height="19" fill="#6b6b6b" stroke="#5b5a50" strokeWidth="1.200" />
      <rect x="6.500" y="6" width="11" height="14.500" fill="#767676" stroke="#4a4a4a" />
      <rect x="7.500" y="1.500" width="9" height="4.500" fill="#5d5d5d" stroke="#4f4f4f" strokeWidth="0.600" />
      <path d="M8.500 9h4M8.500 11.500h7M8.500 14h6M8.500 16.500h7" stroke="#494949" strokeWidth="1.100" />
    </Ico>
  );
}

const Y = "#fde74c";
const YB = "#c8982c";

function SelectExpr() {
  return (
    <Ico>
      <rect x="8" y="8.500" width="13" height="13.200" fill={Y} stroke={YB} />
      <path d="M12.500 5.500 C12 1.500 6 1.200 5.600 5 C5.500 7.500 7.500 8.200 9.500 8.200 C6 8.200 3.500 9.500 3.600 12 C3.900 16.500 12 16.200 12.600 12" stroke="#5c3566" strokeWidth="1.900" strokeLinecap="round" />
      <path d="M5.500 4.500 Q6 2.800 8 2.600 M3.800 11 Q4.200 9.600 5.600 9" stroke="#b79ac4" strokeWidth="0.900" strokeLinecap="round" />
    </Ico>
  );
}

function SelectAll() {
  return (
    <Ico>
      <g fill={Y} stroke={YB} strokeWidth="1.100">
        <rect x="2.500" y="2.500" width="19" height="5.200" />
        <rect x="2.500" y="9.400" width="19" height="5.200" />
        <rect x="2.500" y="16.300" width="19" height="5.200" />
      </g>
    </Ico>
  );
}

function InvertSelection() {
  return (
    <Ico>
      <path d="M3.500 2.500H21.500V20.500z" fill="#e9e9e9" stroke="#8a8a8a" />
      <path d="M2.500 3.500V21.500H20.500z" fill={Y} stroke={YB} />
      <path d="M2.500 2.500L21.500 21.500" stroke="#333" strokeWidth="1.200" />
    </Ico>
  );
}

function Deselect() {
  return (
    <Ico>
      <rect x="2.500" y="2.500" width="13" height="13.500" fill={Y} stroke={YB} />
      <rect x="13" y="13.500" width="11" height="10.500" rx="1.500" fill="#c8271d" />
      <circle cx="18.500" cy="18.700" r="3.900" stroke="#f3e4e4" strokeWidth="1.400" fill="#dd6b6b" />
      <path d="M15.900 21.300L21.200 16" stroke="#f3e4e4" strokeWidth="1.400" />
    </Ico>
  );
}

function Filter() {
  return (
    <Ico>
      <path d="M2.500 5.500H21.500L14.500 14V23.500L10 21.500V14z" fill="#6d9bca" stroke="#3f648b" strokeWidth="0.900" />
      <path d="M4 6.500L11.300 14.500V21" stroke="#a9c8e6" strokeWidth="1.300" />
      <rect x="2.500" y="1.800" width="19" height="4" fill={Y} stroke="#3f5f86" strokeWidth="0.900" />
    </Ico>
  );
}

function TableBase({ body = "#e9e9e9" }: { body?: string }) {
  return (
    <>
      <rect x="2.500" y="2.500" width="19" height="19" fill={body} stroke="#6d9bca" strokeWidth="1.200" />
      <rect x="3.200" y="3.200" width="17.600" height="4" fill="#b5d7f3" />
      <path d="M5 5.200h4M15 5.200h4M5 10.200h5M14 10.200h5M5 13.200h5M14 13.200h5M5 16.200h5M14 16.200h5" stroke="#6d9bca" strokeWidth="1.200" />
    </>
  );
}

function MoveUp() {
  return (
    <Ico>
      <TableBase />
      <rect x="3.500" y="16.500" width="17" height="4.300" fill={Y} stroke={YB} />
      <path d="M5.500 18.700h4M12 18.700h6" stroke="#8aa6a0" strokeWidth="1.200" />
      <path d="M12 3.500L16.500 9H13.600V16.500H10.400V9H7.500z" fill="#6d9bca" stroke="#415a75" strokeWidth="0.900" />
    </Ico>
  );
}

function PanTo() {
  return (
    <Ico>
      <rect x="2.500" y="2.500" width="13" height="13.500" fill={Y} stroke={YB} />
      <g fill="#6d9bca" stroke="#3f5c7c" strokeWidth="0.900">
        <path d="M12 1L16.500 6H13.500V9H10.500V6H7.500z" />
        <path d="M12 24L16.500 19H13.500V16H10.500V19H7.500z" />
        <path d="M1 12.500L6 8V11H9V14H6V17z" />
        <path d="M23 12.500L18 8V11H15V14H18V17z" />
      </g>
    </Ico>
  );
}

function ZoomTo() {
  return (
    <Ico>
      <rect x="2.500" y="2.500" width="12" height="13.500" fill={Y} stroke={YB} />
      <path d="M8.500 15L2.500 22.500" stroke="#555" strokeWidth="3.400" strokeLinecap="round" />
      <path d="M7.500 16.800L3 22" stroke="#fcb93c" strokeWidth="2" />
      <ellipse cx="14.500" cy="9.200" rx="8" ry="8.200" fill="#d6d5c4" stroke="#8d8d85" />
      <path d="M14.500 1.500a8 7.800 0 0 1 0 15.500z" fill="#c2c2c2" />
      <ellipse cx="11.500" cy="6.500" rx="3" ry="4" fill="#fff" opacity="0.750" />
    </Ico>
  );
}

function ColumnDim({ x }: { x?: boolean }) {
  return (
    <Ico>
      <rect x="2.500" y="2.500" width="19" height="19" fill="#54575a" stroke="#4a4d50" />
      <path d="M4 6h4M13 6h7M4 10h4M13 10h7M4 14h4M13 14h7M4 18h4M13 18h4" stroke="#3e4144" strokeWidth="1.400" />
      <rect x="7" y="1" width="5" height="22" fill={x ? "#574d4b" : "#57544a"} stroke={x ? "#473c3a" : "#464338"} />
      <rect x="13.500" y="13.500" width="10" height="10" rx="2" fill={x ? "#4f4545" : "#464538"} />
      {x ? (
        <path d="M16.300 16.300l4.500 4.500M20.800 16.300l-4.500 4.500" stroke="#8b8585" strokeWidth="1.700" />
      ) : (
        <path d="M18.500 14.600v7.800M15 16.500l7 4M22 16.500l-7 4" stroke="#77766a" strokeWidth="1.200" />
      )}
    </Ico>
  );
}

function FieldCalcPencil() {
  return (
    <Ico>
      <TableBase />
      <path d="M14.500 2L19 4.200L10 19.500L5.800 17z" fill="#e5692f" stroke="#8e3a12" strokeWidth="0.700" />
      <path d="M16.600 3.500L8 18" stroke="#f7a171" strokeWidth="1.200" />
      <path d="M14.200 1L19.800 3.600L19 5.400L13.600 3z" fill="#eee" />
      <path d="M5.800 17L10 19.500L5 23.500z" fill="#ccc" stroke="#555" strokeWidth="0.700" />
    </Ico>
  );
}

function Abacus() {
  return (
    <Ico>
      <path d="M3 2.500v19M21 2.500v19M3 4.500h18M3 10.500h18M3 16.500h18" stroke="#666" />
      <rect x="1.500" y="20.500" width="21" height="2.300" fill="#d5d5d5" stroke="#666" strokeWidth="0.500" />
      <g stroke="#333" strokeWidth="0.500">
        <circle cx="9.500" cy="4.500" r="2.200" fill="#d63a3a" /><circle cx="17" cy="4.500" r="2.200" fill="#d63a3a" />
        <circle cx="7.500" cy="10.500" r="2.200" fill="#a9e6a4" /><circle cx="12" cy="10.500" r="2.200" fill="#a9e6a4" />
        <circle cx="7.500" cy="16.500" r="2.200" fill="#a9d6f0" /><circle cx="12.200" cy="16.500" r="2.200" fill="#a9d6f0" /><circle cx="17" cy="16.500" r="2.200" fill="#a9d6f0" />
      </g>
    </Ico>
  );
}

function Conditional() {
  return (
    <Ico>
      <rect x="2.500" y="2.500" width="19" height="5.200" fill="#fff" stroke="#777" />
      <rect x="9" y="4.200" width="9" height="1.800" fill="#888" stroke="#555" strokeWidth="0.500" />
      <rect x="2.500" y="9.400" width="19" height="5.200" fill="#b6f0b2" stroke="#4e8f4a" />
      <rect x="9" y="11.100" width="9" height="1.800" fill="#888" stroke="#4e6f4a" strokeWidth="0.500" />
      <rect x="2.500" y="16.300" width="19" height="5.200" fill="#fff" stroke="#777" />
      <rect x="5" y="18" width="3" height="2" fill="#a31515" />
      <rect x="9" y="18" width="10" height="2" fill="#f5a9a9" />
    </Ico>
  );
}

function Actions() {
  return (
    <Ico>
      <g stroke="#e3e3e3" strokeWidth="3.400">
        <path d="M10.500 1.300V19M1.700 10H19.300M4.300 3.900L16.700 16.100M16.700 3.900L4.300 16.100" />
      </g>
      <circle cx="10.500" cy="10" r="7.300" fill="#e3e3e3" />
      <circle cx="10.500" cy="10" r="5.400" fill="#6d9bca" stroke="#46698e" strokeWidth="0.900" />
      <path d="M8.800 6.800L14 10L8.800 13.200z" fill="#fff" />
      <path d="M13.500 12L23 18L19 18.600L22.600 23L21 24L17.600 19.600L15.500 22.500z" fill="#fff" stroke="#333" strokeWidth="0.700" />
    </Ico>
  );
}

function DockTable() {
  return (
    <Ico>
      <rect x="4.500" y="2.500" width="17" height="17" fill="#fff" stroke="#777" />
      <rect x="4" y="2" width="18" height="4" fill="#777" />
      <rect x="2.500" y="11" width="14.500" height="11" fill="#e9e9e9" stroke="#6b88a8" />
      <rect x="3" y="11.200" width="13.500" height="2.400" fill="#b5d7f3" />
      <path d="M4.500 16h3M9.500 16h5M4.500 18.200h3M9.500 18.200h5M4.500 20.400h3M9.500 20.400h5" stroke="#6d9bca" strokeWidth="1.100" />
    </Ico>
  );
}

function Folder({ children }: { children?: ReactNode }) {
  return (
    <svg viewBox="0 0 32 32" className="size-8 shrink-0" fill="none">
      <path d="M3 4h9l3 3h14v20H3z" fill="#ececec" stroke="#9a9a90" strokeWidth="1.600" />
      {children}
    </svg>
  );
}

/* ---------- sidebar ---------- */

const Grip = () => (
  <div className="grid grid-cols-2 gap-[2px]">
    {Array.from({ length: 12 }, (_, i) => (
      <div key={i} className="h-1 w-1 bg-[#7c7c7c]" />
    ))}
  </div>
);

const tree: { arrow: "r" | "d" | null; nested?: boolean; icon: ReactNode; label: string }[] = [
  { arrow: "r", icon: <Folder />, label: "/Volumes" },
  {
    arrow: "d",
    icon: (
      <svg viewBox="0 0 32 32" className="size-8 shrink-0">
        <path d="M16 1l3.800 10.500H31l-9 6.700L25.500 30 16 22.500 6.500 30 10 18.200 1 11.500h11.200z" fill="#fff06a" stroke="#c9a02a" strokeWidth="1.500" />
      </svg>
    ),
    label: "Favorites",
  },
  { arrow: "r", nested: true, icon: <Folder />, label: "/Users" },
  { arrow: "r", nested: true, icon: <Folder />, label: "/Users" },
  {
    arrow: "r",
    icon: (
      <svg viewBox="0 0 32 32" className="size-8 shrink-0">
        <path d="M3 4h24v3h3v22H3z" fill="#dcdcdc" stroke="#999" strokeWidth="1.200" />
        <path d="M3 4h5v20l-5 4z" fill="#f4f4f4" stroke="#999" />
        <path d="M18 4v10q3 4 6 0V4" fill="#6d9bca" stroke="#2f5b8d" strokeWidth="1.300" />
      </svg>
    ),
    label: "Spatial Bookmarks",
  },
  {
    arrow: "r",
    icon: (
      <svg viewBox="0 0 32 32" className="size-8 shrink-0" fill="none">
        <path d="M3 4h9l3 3h14v20H3z" fill="#b7dd5a" stroke="#8a9a60" strokeWidth="1.500" />
        <path d="M4 12l24 14M4 22l10-12" stroke="#f2f7c8" strokeWidth="2" />
        <path d="M16 12l8-4 5 5-5 5-6-2z" fill="#2f8f2f" />
      </svg>
    ),
    label: "Project Home",
  },
  {
    arrow: "r",
    icon: (
      <Folder>
        <path d="M9 17l7-7 7 7M11.500 16v7h9v-7" stroke="#333" strokeWidth="2" />
      </Folder>
    ),
    label: "Home",
  },
  { arrow: "r", icon: <Folder />, label: "/ (Macintosh HD)" },
  {
    arrow: "r",
    icon: (
      <svg viewBox="0 0 32 32" className="size-8 shrink-0">
        <circle cx="16" cy="11" r="10" fill="#8fb6dc" stroke="#2d4f74" strokeWidth="1.200" />
        <path d="M9 7l5-3 3 3-4 4zM18 10l5-3 1 6-5 1z" fill="#2d4f74" />
        <path d="M2 13l14 7v10L2 23z" fill="#e3b83a" stroke="#3a300a" strokeWidth="0.800" />
        <path d="M30 13l-14 7v10l14-7z" fill="#fff07a" stroke="#3a300a" strokeWidth="0.800" />
      </svg>
    ),
    label: "GeoPackage",
  },
  {
    arrow: null,
    icon: (
      <svg viewBox="0 0 32 32" className="size-8 shrink-0">
        <path d="M1 30C5 14 16 5 30 2c0 10-10 20-24 22z" fill="#7fa9d4" stroke="#2f5680" strokeWidth="1.200" />
        <path d="M1 30C8 18 16 12 27 6M12 16l9 0M16 12l8 0" stroke="#2f5680" strokeWidth="1.200" fill="none" />
      </svg>
    ),
    label: "SpatiaLite",
  },
  {
    arrow: null,
    icon: (
      <svg viewBox="0 0 32 32" className="size-8 shrink-0">
        <path d="M3 8C4 1 12 2 16 4c5-3 13-2 14 4 0 5-3 9-6 12h5c-2 4-6 3-8 3l-1 7h-5l-1-9-4-1C5 20 2 14 3 8z" fill="#6d9bca" stroke="#3b638f" strokeWidth="1.200" />
        <path d="M11 6c-2 5-1 10 3 12M21 6c3 4 2 8 0 12" stroke="#35587f" strokeWidth="1.500" fill="none" />
      </svg>
    ),
    label: "PostgreSQL",
  },
  {
    arrow: null,
    icon: (
      <svg viewBox="0 0 32 32" className="size-8 shrink-0" fill="none">
        <rect x="2" y="2" width="28" height="28" stroke="#5b82ad" strokeWidth="2.600" strokeDasharray="3 2.500" />
        <rect x="6" y="6" width="20" height="20" fill="#6d9bca" stroke="#8db3dc" />
      </svg>
    ),
    label: "SAP HANA",
  },
];

const Arrow = ({ dir }: { dir: "r" | "d" | null }) => (
  <svg viewBox="0 0 16 16" className="size-4 shrink-0" fill="#a9a9a9">
    {dir === "r" && <path d="M4 0l8 8-8 8z" />}
    {dir === "d" && <path d="M0 4h16l-8 8z" />}
  </svg>
);

const Check = ({ className = "" }: { className?: string }) => (
  <span className={"flex size-7 shrink-0 items-center justify-center border border-[#111] bg-[#1a1a1a] " + className}>
    <svg viewBox="0 0 20 20" className="size-5" fill="none">
      <path d="M3 11l4 6L16 2" stroke="#dcdcdc" strokeWidth="2.200" />
    </svg>
  </span>
);

function Sidebar() {
  return (
    <div className="flex w-[788px] shrink-0 flex-col overflow-hidden bg-[#323232] text-[29px] font-medium text-[#dcdcdc]">
      <div className="flex h-[118px] shrink-0 flex-col pl-[6px]">
        <div className="flex h-[37px] items-center text-[30px]">
          <Fit w={111}>Browser</Fit>
        </div>
        <div className="flex h-[79px] items-center gap-[17px] pl-[9px]">
          <svg viewBox="0 0 48 48" className="size-12" fill="none">
            <rect x="3" y="3" width="36" height="34" fill="#ececec" stroke="#9a9a94" strokeWidth="2" />
            <rect x="26" y="29" width="18" height="18" rx="3" fill="#4f8f56" />
            <path d="M35 32v12M29 38h12" stroke="#fff" strokeWidth="3" />
          </svg>
          <Refresh className="size-12" />
        </div>
      </div>
      <div className="flex h-[480px] shrink-0 flex-col bg-[#1e1e1e]">
        {tree.map((t, i) => (
          <div key={i} className={"flex h-10 items-center " + (t.nested ? "pl-[40px]" : "pl-[8px]")}>
            <Arrow dir={t.arrow} />
            <span className="ml-[14px] flex">{t.icon}</span>
            <span className="ml-[11px] whitespace-nowrap tracking-[-0.02em]">{t.label}</span>
          </div>
        ))}
      </div>
      <div className="flex h-[134px] shrink-0 flex-col pl-[6px]">
        <div className="flex h-[68px] items-center text-[30px]">
          <Fit w={90}>Layers</Fit>
        </div>
        <div className="flex h-[50px] items-center gap-[18px] pl-[8px]">
          <svg viewBox="0 0 48 48" className="size-12" fill="none">
            <path d="M3 20l22-12 6 8-20 18z" fill="#f2d440" />
            <path d="M4 26l20-4 4 8-18 8z" fill="#6d9bca" />
            <path d="M3 38l12-10 8 8-4 6z" fill="#e0362c" />
            <path d="M18 26l12-6 6 12-12 12-8-8z" fill="#f0c48a" stroke="#a06a24" />
            <path d="M32 24L45 8" stroke="#d98e35" strokeWidth="4.500" strokeLinecap="round" />
          </svg>
          <svg viewBox="0 0 48 48" className="size-12" fill="none">
            <path d="M4 22v22h22" stroke="#9a9a94" strokeWidth="3" />
            <rect x="10" y="12" width="26" height="24" fill="#ddd" stroke="#888" strokeWidth="2" />
            <rect x="18" y="6" width="24" height="24" stroke="#aaa" strokeWidth="3" />
            <path d="M23 8v18q4 8 8 0V6q-4-6-6 0" stroke="#3d668f" strokeWidth="2.500" />
            <rect x="28" y="29" width="18" height="18" rx="3" fill="#4f8f56" />
            <path d="M37 32v12M31 38h12" stroke="#fff" strokeWidth="3" />
          </svg>
        </div>
      </div>
      <div className="flex flex-1 flex-col bg-[#1e1e1e] font-bold">
        <div className="flex h-10 shrink-0 items-center bg-[#474747] pl-[46px]">
          <Check />
          <span className="ml-[18px] size-[18px] rounded-full border border-[#333] bg-[#9479b3]" />
          <span className="ml-[19px] underline decoration-2 underline-offset-4">street-trees</span>
        </div>
        <div className="flex h-10 shrink-0 items-center pl-[12px]">
          <Arrow dir="d" />
          <Check className="ml-[18px]" />
          <svg viewBox="0 0 26 26" className="ml-[16px] size-[26px]">
            <rect width="26" height="26" fill="#33475c" />
            <path d="M9 0h8v9H9zM0 9h9v8H0zM17 9h9v8h-9zM9 17h8v9H9z" fill="#a9c8e6" />
          </svg>
          <span className="ml-[14px]">OpenStreetMap</span>
        </div>
      </div>
    </div>
  );
}

/* ---------- attribute table ---------- */

const records: [string, string, string, string, string, string][] = [
  ["141521", "1840", "LILLOOET ST", "SATIVA", "SPANISH CHESTNUT", "N"],
  ["66133", "1903", "CEDAR CRE…", "SATIVA", "SPANISH CHESTNUT", "N"],
  ["66140", "1950", "CEDAR CRE…", "SATIVA", "SPANISH CHESTNUT", "N"],
  ["66143", "1961", "CEDAR CRE…", "SATIVA", "SPANISH CHESTNUT", "N"],
  ["66145", "1961", "CEDAR CRE…", "SATIVA", "SPANISH CHESTNUT", "N"],
  ["66147", "1961", "CEDAR CRE…", "SATIVA", "SPANISH CHESTNUT", "N"],
  ["73000", "4531", "DUMFRIES …", "SATIVA", "SPANISH CHESTNUT", "N"],
  ["18501", "1926", "W 17TH AV", "SATIVA", "SPANISH CHESTNUT", "N"],
  ["19296", "1927", "W 18TH AV", "SATIVA", "SPANISH CHESTNUT", "N"],
  ["21609", "2089", "W 20TH AV", "SATIVA", "SPANISH CHESTNUT", "N"],
  ["123235", "6687", "GLADSTON…", "DENTATA", "AMERICAN CHESTNUT", "N"],
  ["124792", "3147", "E 5TH AV", "SATIVA", "SPANISH CHESTNUT", "N"],
  ["33266", "3927", "W 34TH AV", "CRENATA", "JAPANESE CHESTNUT", "N"],
  ["33267", "3927", "W 34TH AV", "CRENATA", "JAPANESE CHESTNUT", "N"],
  ["110118", "4501", "SELKIRK ST", "SATIVA", "SPANISH CHESTNUT", "Y"],
  ["111333", "1170", "SLOCAN ST", "SATIVA", "SPANISH CHESTNUT", "N"],
];

const grid = "grid grid-cols-[50px_200px_200px_200px_292px_388px_100px_500px_155px]";

function Cell({ children, last = false, className = "" }: { children: ReactNode; last?: boolean; className?: string }) {
  return (
    <div className={"flex items-center overflow-hidden whitespace-nowrap pb-[2px] pl-[6px] " + (last ? "" : "border-r-2 border-[#262a2e] ") + className}>
      {children}
    </div>
  );
}

function HeadCell({ w, children, left = false }: { w: number; children: string; left?: boolean }) {
  return (
    <div className={"flex items-center overflow-hidden border-r-2 border-[#262626] shadow-[inset_-2px_0_0_#555] " + (left ? "justify-start pl-[2px]" : "justify-center")}>
      <Fit w={w}>{children}</Fit>
    </div>
  );
}

const Sep = () => (
  <div className="flex w-[14px] shrink-0 justify-center">
    <div className="h-[38px] w-[2px] bg-[#262626]" />
  </div>
);

const tools: (ReactNode | "sep")[] = [
  <Pencil />, <ToggleEdit />, <SaveEdits />, <Refresh className="size-12" />, "sep",
  <NewField />, <DeleteField />, <Scissors />, <CopyIcon />, <PasteIcon />, "sep",
  <SelectExpr />, <SelectAll />, <InvertSelection />, <Deselect />, <Filter />, <MoveUp />, <PanTo />, <ZoomTo />, "sep",
  <ColumnDim />, <ColumnDim x />, <FieldCalcPencil />, <Abacus />, "sep",
  <Conditional />, "sep",
  <Actions />, <DockTable />,
];

const scrollBtn = "flex items-center justify-center border-2 border-[#555] bg-[#3a3a3a]";

function AttributeTable() {
  return (
    <div className="absolute left-[152px] top-[84px] flex h-[1212px] w-[2116px] flex-col overflow-hidden rounded-[20px] border-2 border-[#5e5f60] bg-[#323232] shadow-[0_0_0_2px_#0a0a0a,0_36px_90px_10px_rgba(0,0,0,0.65)]">
      <div className="flex h-[54px] shrink-0 items-center border-b-2 border-black bg-[#3d3e40] pl-[14px]">
        <div className="flex gap-4">
          <span className="size-6 rounded-full bg-[#ed6a5f]" />
          <span className="size-6 rounded-full bg-[#f5bf4f]" />
          <span className="size-6 rounded-full bg-[#61c554]" />
        </div>
        <div className="ml-[527px] pb-[3px] text-[26px] font-bold text-[#b9babb]">
          <Fit w={828}>street-trees — Features Total: 151473, Filtered: 62, Selected: 62</Fit>
        </div>
      </div>

      <div className="flex h-[78px] shrink-0 items-center border-b-2 border-[#262626] pl-[5px]">
        {tools.map((t, i) =>
          t === "sep" ? (
            <Sep key={i} />
          ) : (
            <div key={i} className="flex w-[66px] shrink-0 justify-center">
              {t}
            </div>
          ),
        )}
      </div>

      <div className="flex h-[986px] shrink-0">
        <div className="flex w-[2084px] shrink-0 flex-col overflow-hidden">
          <div className={grid + " h-[46px] shrink-0 border-b-2 border-t border-b-[#232323] border-t-[#555] bg-gradient-to-b from-[#414141] to-[#373737] pt-[3px] text-[29px] text-black"}>
            <div />
            <HeadCell w={94}>tree_id</HeadCell>
            <HeadCell w={184}>civic_number</HeadCell>
            <HeadCell w={138}>std_street</HeadCell>
            <HeadCell w={175}>genus_name</HeadCell>
            <HeadCell w={197}>species_name</HeadCell>
            <HeadCell w={99} left>ivar _na</HeadCell>
            <HeadCell w={212}>common_name</HeadCell>
            <div className="flex items-center overflow-hidden whitespace-nowrap pl-[38px]">
              <Fit w={118}>assigned</Fit>
            </div>
          </div>
          {records.map(([id, civic, street, species, common, assigned], i) => (
            <div key={i} className={grid + " h-[60px] shrink-0 border-b-2 border-[#23272b] bg-[#3f648c] text-[30px] leading-none text-white"}>
              <div className="flex items-center border-r-[3px] border-t-2 border-[#262626] border-t-[#505050] bg-[#3a3a3a] pl-[4px] tracking-[-0.01em] text-black">
                {i + 1}
              </div>
              <Cell className="tracking-[-0.005em]">{id}</Cell>
              <Cell className="tracking-[-0.005em]">{civic}</Cell>
              <Cell className="tracking-[-0.03em]">
                {street.startsWith("CEDAR") ? (
                  <span className="block leading-[35px]">
                    CEDAR
                    <br />
                    CRE…
                  </span>
                ) : (
                  street
                )}
              </Cell>
              <Cell className="tracking-[-0.05em]">CASTANEA</Cell>
              <Cell className="tracking-[-0.05em]">{species}</Cell>
              <Cell className="italic tracking-[-0.02em]"><span className="pl-[2px]">NULL</span></Cell>
              <Cell className="tracking-[-0.035em]">{common}</Cell>
              <Cell last>{assigned}</Cell>
            </div>
          ))}
        </div>
        <div className="flex w-7 shrink-0 flex-col border-l-2 border-[#262626] bg-[#333]">
          <div className={scrollBtn + " h-[27px] shrink-0"}>
            <svg viewBox="0 0 16 10" className="h-[9px] w-4"><path d="M0 10h16L8 0z" fill="#c4c4c4" /></svg>
          </div>
          <div className="mt-[3px] h-[224px] shrink-0 border-2 border-[#555] bg-[#3f3f3f]" />
          <div className="flex-1" />
          <div className={scrollBtn + " h-[27px] shrink-0"}>
            <svg viewBox="0 0 16 10" className="h-[9px] w-4"><path d="M0 0h16L8 10z" fill="#c4c4c4" /></svg>
          </div>
        </div>
      </div>

      <div className="flex h-[28px] shrink-0 border-b-2 border-t-2 border-[#262626] bg-[#383838]">
        <div className={scrollBtn + " w-[25px] shrink-0"}>
          <svg viewBox="0 0 10 16" className="h-4 w-[9px]"><path d="M10 0v16L0 8z" fill="#c4c4c4" /></svg>
        </div>
        <div className="ml-[3px] w-[880px] border-2 border-[#555] bg-gradient-to-b from-[#444] to-[#3a3a3a]" />
        <div className="ml-[1147px] flex">
          <div className={scrollBtn + " w-[28px] shrink-0"}>
            <svg viewBox="0 0 10 16" className="h-4 w-[9px]"><path d="M0 0v16l10-8z" fill="#c4c4c4" /></svg>
          </div>
        </div>
      </div>

      <div className="flex flex-1 items-center justify-between pl-[4px] pr-[6px] pt-[3px]">
        <div className="flex h-[57px] w-[410px] items-center border-[6px] border-[#ed4325]">
          <div className="flex h-[46px] w-[395px] items-center rounded-[4px] border-2 border-[#575757] bg-gradient-to-b from-[#474747] to-[#383838] text-[29px] text-black">
            <svg viewBox="0 0 24 24" className="-ml-[1px] size-8 shrink-0" fill="none">
              <TableBase />
              <rect x="3.500" y="8" width="17" height="11.500" fill={Y} stroke={YB} />
              <path d="M5.500 11h5M13 11h5M5.500 14h5M13 14h5M5.500 17h5M13 17h5" stroke="#5c7f8c" strokeWidth="1.200" />
            </svg>
            <span className="ml-[3px]">
              <Fit w={330}>Show Selected Features</Fit>
            </span>
            <svg viewBox="0 0 12 7" className="ml-[14px] mt-[28px] h-[7px] w-3 shrink-0"><path d="M0 0h12L6 7z" fill="#ccc" /></svg>
          </div>
        </div>
        <div className="flex items-center gap-[10px]">
          <Ico className="size-8">
            <rect x="2" y="2" width="20" height="20" fill="#e9e9e9" />
            <path d="M4.500 8h4.500M4.500 16h4.500" stroke="#555" strokeWidth="2" />
            <rect x="11" y="5.500" width="8" height="5" fill="#fff" stroke="#6d9bca" strokeWidth="1.400" />
            <rect x="11" y="13.500" width="8" height="5" fill="#fff" stroke="#6d9bca" strokeWidth="1.400" />
          </Ico>
          <div className="flex h-[44px] w-[45px] items-center justify-center rounded-[5px] border-2 border-[#575757] bg-[#272727] shadow-[0_0_0_2px_#222]">
            <Ico className="size-8">
              <rect x="2" y="2" width="20" height="20" fill="#ececec" stroke="#6d9bca" />
              <rect x="2.500" y="2.500" width="19" height="5.500" fill="#6d9bca" />
              <path d="M5 5.200h4M13 5.200h6" stroke="#3f648b" strokeWidth="1.600" />
              <path d="M5 11h4M11 11h8M5 14h4M11 14h8M5 17h4M11 17h8M5 19.800h4M11 19.800h8" stroke="#6d9bca" strokeWidth="1.100" />
            </Ico>
          </div>
        </div>
      </div>
    </div>
  );
}

/* ---------- menu bar ---------- */

const menu: [string, number, number][] = [
  ["Project", 43, 84], ["Edit", 42, 45], ["View", 43, 56], ["Layer", 44, 65], ["Settings", 43, 98], ["Plugins", 44, 86],
  ["Vector", 44, 78], ["Raster", 42, 76], ["Database", 42, 112], ["Web", 44, 53], ["Mesh", 43, 64], ["MMQGIS", 42, 106],
  ["Processing", 42, 132], ["Window", 42, 95], ["Help", 43, 55],
];

function MenuBar() {
  return (
    <div className="flex h-[48px] shrink-0 items-center bg-[#afd1ee] pb-[2px] pl-[40px] text-[26px] font-medium text-[#0b0f14]">
      <svg viewBox="0 0 26 32" className="h-8 w-[27px] shrink-0" fill="#000">
        <path d="M13.200 8.300c1.400 0 3.100-1.500 5.600-1.500 2.200 0 4.300 1 5.700 2.900-4.900 2.900-4.100 9.900 1 11.900-1.300 3.700-4.200 9-7.200 9-1.900 0-2.700-1.200-5-1.200s-3.200 1.200-5 1.200C4.700 30.600.6 23.600.6 17.200c0-6.400 4-10.300 7.600-10.300 2.300 0 3.900 1.400 5 1.400z" />
        <path d="M18.600.2c.3 2.900-2.300 6.500-5.600 6.400C12.600 3.600 15.500.4 18.600.2z" />
      </svg>
      <span className="ml-[41px] font-bold text-black">
        <Fit w={124}>QGIS-LTR</Fit>
      </span>
      {menu.map(([label, gap, w]) => (
        <span key={label} className="flex" style={{ marginLeft: gap }}>
          <Fit w={w}>{label}</Fit>
        </span>
      ))}
      <svg viewBox="0 0 20 30" className="ml-[104px] mt-[2px] h-[30px] w-5 shrink-0" fill="none" stroke="#111820" strokeWidth="2">
        <path d="M1.500 8.500L17 21L10 27V3L17 9L1.500 21.500" />
      </svg>
      <svg viewBox="0 0 30 30" className="ml-[39px] size-[30px] shrink-0" fill="none">
        <circle cx="15" cy="15" r="12.800" stroke="#111820" strokeWidth="2.400" />
        <path d="M11.500 9.500v11l9-5.500z" fill="#111820" />
      </svg>
      <svg viewBox="0 0 36 28" className="ml-[39px] h-7 w-9 shrink-0" fill="none" stroke="#111820" strokeWidth="4">
        <path d="M2.500 10.500a22 22 0 0 1 31 0" />
        <path d="M8.500 16.500a13.500 13.500 0 0 1 19 0" />
        <path d="M18 25.500l-5-5a7 7 0 0 1 10 0z" fill="#111820" stroke="none" />
      </svg>
      <svg viewBox="0 0 52 28" className="ml-[36px] mt-[2px] h-7 w-[52px] shrink-0" fill="none">
        <rect x="1.500" y="2.500" width="44" height="23" rx="6.500" stroke="#5f7689" strokeWidth="2" />
        <rect x="4.500" y="5.500" width="38" height="17" rx="4" fill="#111820" />
        <path d="M48 10v8q3-1 3-4t-3-4z" fill="#5f7689" />
        <path d="M27 2L15 16h8l-3 10 13-14h-8z" fill="#111820" stroke="#afd1ee" strokeWidth="2" />
      </svg>
      <svg viewBox="0 0 28 28" className="ml-[34px] mt-[2px] size-7 shrink-0" fill="none" stroke="#111820" strokeWidth="2.600">
        <circle cx="12" cy="12" r="9" />
        <path d="M18.500 18.500L26 26" strokeWidth="3" />
      </svg>
      <svg viewBox="0 0 28 30" className="ml-[38px] mt-px h-[30px] w-7 shrink-0" fill="none">
        <rect x="2.200" y="3.200" width="23.600" height="10" rx="5" stroke="#111820" strokeWidth="2.400" />
        <circle cx="7.500" cy="8.200" r="3" fill="#111820" />
        <rect x="1" y="17" width="26" height="12" rx="6" fill="#111820" />
        <circle cx="21" cy="23" r="3.400" fill="#afd1ee" />
      </svg>
      <span className="ml-[36px]">
        <Fit w={242}>Sat Oct 12  4:27 PM</Fit>
      </span>
    </div>
  );
}

/* ---------- status bar ---------- */

const fieldBox = "flex h-[48px] shrink-0 items-center rounded-[4px] bg-[#1e1e1e] text-[29px]";

function Spin() {
  return (
    <div className="ml-auto flex h-[46px] w-[27px] flex-col items-center justify-center gap-3 rounded-r border-2 border-l-0 border-[#4e4e4e] bg-[#363636]">
      <svg viewBox="0 0 14 8" className="h-2 w-[14px]"><path d="M0 8h14L7 0z" fill="#b5b5b5" /></svg>
      <svg viewBox="0 0 14 8" className="h-2 w-[14px]"><path d="M0 0h14L7 8z" fill="#b5b5b5" /></svg>
    </div>
  );
}

function StatusBar() {
  return (
    <div className="flex h-[64px] shrink-0 items-center bg-[#323232] pl-[7px] pt-[4px] text-[26px] font-medium text-[#dadada]">
      <div className="flex h-[52px] w-[480px] shrink-0 items-center rounded-[4px] bg-[#1e1e1e] pl-[16px] text-[30px] font-normal text-[#989898]">
        <svg viewBox="0 0 28 28" className="size-[26px]" fill="none" stroke="#989898" strokeWidth="2.200">
          <circle cx="11" cy="11" r="8.500" />
          <path d="M17 17l9 9" />
        </svg>
        <span className="ml-[15px]">
          <Fit w={269}>Type to locate (⌘K)</Fit>
        </span>
      </div>
      <span className="ml-[17px] text-white"><Fit w={374}>62 feature(s) selected on layer</Fit></span>
      <span className="ml-[20px]"><Fit w={133}>Coordinate</Fit></span>
      <div className={fieldBox + " ml-[8px] w-[284px] pl-[17px]"}>
        <Fit w={247}>-13703075,6315581</Fit>
      </div>
      <svg viewBox="0 0 28 32" className="ml-[10px] h-8 w-7 shrink-0" fill="none">
        <ellipse cx="9" cy="9" rx="5" ry="8" transform="rotate(-25 9 9)" fill="#fff" stroke="#000" strokeWidth="1.500" />
        <ellipse cx="16" cy="21" rx="7" ry="9" transform="rotate(-25 16 21)" fill="#fff" stroke="#000" strokeWidth="1.500" />
        <circle cx="17" cy="23" r="3" fill="#fff" stroke="#000" strokeWidth="2" />
        <path d="M6 4l5 9M12 2l3 10M22 6l2-2M24 10h3M3 18l-2 3" stroke="#000" strokeWidth="2" />
      </svg>
      <span className="ml-[29px] text-white"><Fit w={66}>Scale</Fit></span>
      <div className={fieldBox + " ml-[9px] w-[199px] pl-[7px]"}>
        <Fit w={96}>1:58730</Fit>
        <div className="ml-auto flex h-[48px] w-[40px] items-center justify-center rounded-r border-2 border-[#4e4e4e] bg-gradient-to-b from-[#464646] to-[#363636]">
          <svg viewBox="0 0 16 9" className="h-[9px] w-4"><path d="M0 0h16L8 9z" fill="#111" /></svg>
        </div>
      </div>
      <svg viewBox="0 0 26 32" className="ml-[25px] h-8 w-[26px] shrink-0" fill="none">
        <path d="M6 16V9a7 7 0 0 1 14 0v7" stroke="#8d8d8d" strokeWidth="3" />
        <rect x="1" y="14" width="24" height="16" rx="2" fill="#747474" />
      </svg>
      <span className="ml-[17px] text-white"><Fit w={113}>Magnifier</Fit></span>
      <div className={fieldBox + " ml-[8px] w-[194px] pl-[9px]"}>
        <Fit w={71}>100%</Fit>
        <Spin />
      </div>
      <span className="ml-[20px]"><Fit w={100}>Rotation</Fit></span>
      <div className={fieldBox + " ml-[20px] w-[193px] pl-[9px]"}>
        <Fit w={60}>0.0 °</Fit>
        <Spin />
      </div>
      <Check className="ml-[14px]" />
      <span className="ml-[11px]"><Fit w={86}>Render</Fit></span>
      <svg viewBox="0 0 32 32" className="ml-[31px] size-8 shrink-0" fill="none">
        <circle cx="16" cy="14" r="13" fill="#b9b9b9" />
        <path d="M3 14h26M5 8h22M5 20h22M16 1v26M9 3q-5 11 0 22M23 3q5 11 0 22" stroke="#4a4a4a" strokeWidth="1.200" />
        <path d="M12 28h8v3h-8z" fill="#8d8d8d" />
      </svg>
      <span className="ml-[4px] text-black"><Fit w={149}>ESRI:102100</Fit></span>
      <svg viewBox="0 0 34 34" className="ml-[51px] size-[34px] shrink-0" fill="#8d8d8d">
        <path d="M17 3c9 0 16 5 16 12 0 5-3 8-6 10l3 7-9-5c-12 2-20-4-20-12S8 3 17 3z" />
        <circle cx="10" cy="15" r="2.200" fill="#fff" /><circle cx="17" cy="15" r="2.200" fill="#fff" /><circle cx="24" cy="15" r="2.200" fill="#fff" />
      </svg>
      <svg viewBox="0 0 24 24" className="ml-auto mt-auto size-6 shrink-0" fill="#8a8a8a">
        <path d="M18 2h3v3h-3zM18 8h3v3h-3zM12 8h3v3h-3zM18 14h3v3h-3zM12 14h3v3h-3zM6 14h3v3H6zM18 20h3v3h-3zM12 20h3v3h-3zM6 20h3v3H6zM0 20h3v3H0z" />
      </svg>
    </div>
  );
}

/* ---------- main window ---------- */

function MainToolbars() {
  return (
    <div className="flex h-[283px] shrink-0 flex-col bg-[#323232]">
      <div className="flex h-[94px] shrink-0 items-center justify-between border-b-2 border-[#777]">
        <div className="flex items-center pl-2">
          <Grip />
          <svg viewBox="0 0 44 60" className="ml-[24px] h-[60px] w-11" fill="none">
            <path d="M2 2h27l13 13v43H2z" fill="#fff" stroke="#8a8a8a" strokeWidth="2" />
            <path d="M29 2v13h13z" fill="#e9e9e9" stroke="#777" strokeWidth="2" />
          </svg>
          <svg viewBox="0 0 60 50" className="ml-[28px] h-[50px] w-[60px]" fill="none">
            <path d="M2 2h18v6h36v40H2z" fill="#e3c242" stroke="#a8841c" strokeWidth="2" />
            <path d="M10 16h48L50 48H2z" fill="#eacb50" stroke="#a8841c" strokeWidth="2" />
          </svg>
        </div>
        <div className="flex items-center pr-[566px]">
          <svg viewBox="0 0 26 36" className="mt-9 h-[36px] w-[26px]" fill="none">
            <path d="M13 34Q3 20 3 12a10 10 0 0 1 20 0q0 8-10 22z" fill="#5a7f99" />
            <circle cx="13" cy="12" r="4" fill="#323232" />
          </svg>
          <svg viewBox="0 0 16 9" className="ml-[14px] h-[9px] w-4"><path d="M0 0h16L8 9z" fill="#c4c4c4" /></svg>
        </div>
      </div>
      <div className="flex h-[94px] shrink-0 items-center justify-between border-b-2 border-[#777]">
        <div className="flex items-center pl-2">
          <Grip />
          <svg viewBox="0 0 66 66" className="ml-[14px] size-[66px]" fill="none">
            <path d="M2 24L30 18L40 52L16 60z" fill="#d9692f" stroke="#8f3c14" strokeWidth="1.500" />
            <path d="M10 10L36 6L42 44L14 48z" fill="#ecc748" stroke="#9c7a1b" strokeWidth="1.500" />
            <path d="M28 2L64 10L58 46L20 36z" fill="#6d9bca" stroke="#3f648b" strokeWidth="1.500" />
            <rect x="41" y="42" width="23" height="23" rx="4" fill="#4f8f56" />
            <path d="M52.500 45.500v16M44.500 53.500h16" stroke="#fff" strokeWidth="4" />
          </svg>
          <svg viewBox="0 0 66 66" className="ml-[18px] size-[66px]" fill="none">
            <circle cx="34" cy="22" r="20" fill="#8fb6dc" stroke="#2d4f74" strokeWidth="2" />
            <path d="M20 12l10-6 4 8-8 10zM36 18l12-6 2 14-12 4z" fill="#2d4f74" />
            <path d="M2 20L32 38V64L2 46z" fill="#cf9f2f" stroke="#000" strokeWidth="2" />
            <path d="M64 20L32 38V64L64 46z" fill="#f2ea6a" stroke="#000" strokeWidth="2" />
          </svg>
        </div>
        <div className="flex items-center pr-[10px]">
          <div className="flex h-[50px] w-[300px] items-center justify-between rounded-[5px] border-2 border-[#505050] bg-gradient-to-b from-[#3d3d3d] to-[#454545] pl-[91px] pr-[12px] text-[28px] text-[#161616]">
            px
            <svg viewBox="0 0 16 9" className="h-[9px] w-4"><path d="M0 0h16L8 9z" fill="#222" /></svg>
          </div>
          <svg viewBox="0 0 56 60" className="ml-[18px] h-[60px] w-14" fill="none">
            <path d="M17 27L4 3M17 27L50 14M17 27V57" stroke="#7fbf83" strokeWidth="5" strokeLinecap="round" />
            <rect x="11" y="21" width="12" height="12" fill="#c9c9c9" stroke="#888" strokeWidth="3" />
          </svg>
          <svg viewBox="0 0 66 64" className="ml-[20px] h-16 w-[66px]" fill="none">
            <path d="M6 12Q20-4 36 6Q54 2 57 14Q58 32 48 32Q36 28 34 14z" fill="#bdbdbd" stroke="#5a5a5a" strokeWidth="2" />
            <path d="M4 24Q4 8 18 8Q34 10 34 24Q32 34 44 46Q44 60 32 61Q18 58 20 36Q4 34 4 24z" fill="#8bc58f" stroke="#4c4f4c" strokeWidth="3" />
            <path d="M16 31L34 26" stroke="#333" strokeWidth="2" strokeDasharray="5 3" />
            <path d="M54 57h12l-6 7z" fill="#c4c4c4" />
          </svg>
          <svg viewBox="0 0 60 60" className="ml-[17px] size-[60px]" fill="none">
            <path d="M3 3L57 57M57 3L3 57" stroke="#585858" strokeWidth="4.500" strokeLinecap="round" />
            <circle cx="30" cy="30" r="5.500" fill="#585858" />
          </svg>
          <svg viewBox="0 0 60 60" className="ml-[22px] size-[60px]" fill="none">
            <path d="M57 3L3 57" stroke="#585858" strokeWidth="4.500" strokeLinecap="round" />
            <path d="M8 6L26 22L42 20L50 52L34 34L16 40z" fill="#544a34" />
          </svg>
          <svg viewBox="0 0 16 9" className="ml-[14px] h-[9px] w-4"><path d="M0 0h16L8 9z" fill="#c4c4c4" /></svg>
          <span className="ml-[44px] text-[24px] leading-none text-[#3e3e3e]">»</span>
        </div>
      </div>
      <div className="flex h-[92px] shrink-0 items-center border-b-[3px] border-[#777] pl-2">
        <Grip />
        <span className="ml-[24px]"><Grip /></span>
        <svg viewBox="0 0 56 58" className="ml-[18px] h-[58px] w-14" fill="none">
          <rect x="1" y="1" width="53" height="55" fill="#6394c8" stroke="#1c2733" strokeWidth="2" />
          <rect x="2" y="2" width="12" height="53" fill="#2f4758" />
          <text x="34" y="43" fontFamily="Liberation Serif, serif" fontSize="42" fill="#e8f0f8" textAnchor="middle">?</text>
        </svg>
      </div>
    </div>
  );
}

export default function App() {
  return (
    <div className="relative flex h-[1662px] w-[2880px] flex-col overflow-hidden bg-gradient-to-b from-[#7fb0dc] via-[#3a4250] to-[#131418] font-['Inter',sans-serif]">
      <MenuBar />
      <div className="mt-[2px] flex h-[1606px] w-[2880px] shrink-0 flex-col overflow-hidden rounded-[20px] border-2 border-[#5a5b5c] bg-[#323232] shadow-[0_0_0_2px_#111]">
        <div className="flex h-[55px] shrink-0 items-center border-b-2 border-black bg-[#343537] pl-[14px]">
          <div className="flex gap-4">
            <span className="size-6 rounded-full bg-[#58595b]" />
            <span className="size-6 rounded-full bg-[#58595b]" />
            <span className="size-6 rounded-full bg-[#58595b]" />
          </div>
          <div className="ml-[1077px] pb-[4px] text-[26px] font-bold text-[#6c6d6f]">
            <Fit w={487}>*sweet-chestnut-street-trees — QGIS</Fit>
          </div>
        </div>
        <MainToolbars />
        <div className="flex h-[1200px] shrink-0">
          <Sidebar />
          <div className="w-[13px] shrink-0 bg-[#2f2f2f]" />
          <MapCanvas />
        </div>
        <StatusBar />
      </div>
      <div className="flex h-1.5 shrink-0 overflow-hidden text-[26px] leading-[16px] text-black">
        <div className="h-full w-[860px] bg-gradient-to-r from-[#15233a] via-[#6b5748] to-[#3a3430]" />
        <div className="h-full w-[1730px] bg-[#2c2c2c] pl-[56px]">
          <span>Help</span>
          <span className="ml-[1150px]">Select Features</span>
          <span className="ml-[120px]">Close</span>
        </div>
        <div className="h-full w-[290px] bg-gradient-to-r from-[#3b2a1e] via-[#8a4a2c] to-[#2a2622]" />
      </div>
      <AttributeTable />
    </div>
  );
}
